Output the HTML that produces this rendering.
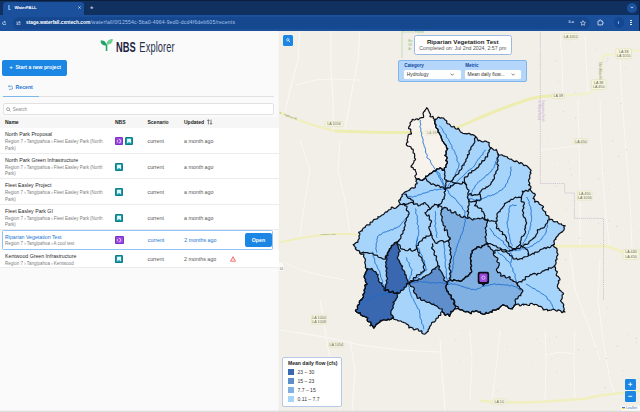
<!DOCTYPE html>
<html><head><meta charset="utf-8"><title>WaterFALL</title>
<style>
*{box-sizing:border-box;margin:0;padding:0}
html,body{width:640px;height:412px;overflow:hidden;background:#fafafa;font-family:"Liberation Sans",sans-serif;}
body{position:relative}
.abs{position:absolute}
#tabstrip{position:absolute;left:0;top:0;width:640px;height:14.5px;background:#10315f;border-top:1px solid #0a1d3c}
#tab{position:absolute;left:3px;top:1.5px;width:81px;height:13px;background:#1a509c;border-radius:3px 3px 0 0}
#toolbar{position:absolute;left:0;top:14.5px;width:640px;height:16px;background:#1a509c}
#pill{position:absolute;left:13px;top:16.5px;width:577px;height:12px;border-radius:6px;background:#164890}
.wt{color:#fff;position:absolute;white-space:nowrap}
#panel{position:absolute;left:0;top:30.5px;width:278.5px;height:381.5px;background:#fafafa}
#logo{position:absolute;left:115.8px;top:39.3px;white-space:nowrap;font-size:15px;line-height:16px;color:#1c2341;transform-origin:0 0;transform:scaleX(0.62)}
#logo b{font-weight:bold}
#logo span{color:#2a3150;margin-left:6px;letter-spacing:0.15px}
#btn{position:absolute;left:2.3px;top:59.5px;width:65.2px;height:16px;background:#1c86e4;border-radius:2px;color:#fff;font-weight:bold;font-size:5.1px;line-height:16px;white-space:nowrap}
#recent{position:absolute;left:15.6px;top:84.2px;font-size:5.15px;font-weight:bold;color:#1976d2;line-height:6.5px}
#tabline{position:absolute;left:2.5px;top:96px;width:271px;height:1.3px;background:#e2e2e2}
#tabline i{position:absolute;left:0;top:-0.2px;width:36px;height:1.6px;background:#7db6ec}
#search{position:absolute;left:2.5px;top:103px;width:271px;height:12px;border:0.6px solid #e2e2e2;border-radius:2px;background:#fff}
#search span{position:absolute;left:9.3px;top:2.9px;font-size:4.5px;line-height:6px;color:#8a8a8a}
#thead{position:absolute;left:0;top:116.5px;width:278.5px;height:11.5px;background:#f6f6f6}
#thead div{position:absolute;top:2.6px;font-size:5px;line-height:6px;font-weight:bold;color:#222}
.row{position:absolute;left:0;width:278.5px;background:#fff;border-bottom:0.6px solid #ececec}
.row.sel{left:2px;width:271.3px;border:0.7px solid #90c4f5;border-radius:1.5px;margin-left:0}
.row .ttl{position:absolute;left:5px;font-size:5.22px;line-height:6.5px;color:#2b2b2b;white-space:nowrap}
.row .sub{position:absolute;left:5px;font-size:4.48px;line-height:6px;color:#7d7d7d;white-space:nowrap}
.row.sel .ttl{color:#1976d2;left:2px}
.row.sel .sub{left:2px}
.row .cell{position:absolute;font-size:5.3px;line-height:6.5px;color:#555;white-space:nowrap}
.row.sel .cell{color:#1976d2;margin-left:-2.7px;margin-top:-1px}
.icw{position:absolute}
.row.sel .icw{margin-left:-2.7px;margin-top:-0.9px}
.ic{display:block;width:8.2px;height:8.2px;border-radius:1.6px;overflow:hidden}
.ic svg{display:block}
.ic.p{background:#9a4ce0;box-shadow:inset 0 0 0 0.9px #7a30c4}
.ic.t{background:#1a9baa;box-shadow:inset 0 0 0 0.9px #0f7c88}
.open{position:absolute;left:242.3px;top:2.3px;width:26.3px;height:14px;border-radius:2px;background:#1c86e4;color:#fff;font-weight:bold;font-size:5.2px;line-height:14px;text-align:center}
.warn{position:absolute}
#map{position:absolute;left:0;top:0}
#map text{font-family:"Liberation Sans",sans-serif}
#msearch{position:absolute;left:282.5px;top:35px;width:10.5px;height:11px;background:#1c86e4;border-radius:1.5px}
#popup{position:absolute;left:413.5px;top:35px;width:98.5px;height:19.5px;background:#fff;border:0.9px solid #9db8de;border-radius:2.5px;text-align:center}
#popup b{display:block;font-size:6.2px;line-height:7.5px;margin-top:1.6px;color:#1d1d1d}
#popup span{display:block;font-size:5.22px;line-height:6.5px;margin-top:0.3px;color:#555}
#cat{position:absolute;left:398px;top:60px;width:129px;height:22px;background:#b5d6fb;border:0.8px solid #82b4ee;border-radius:2px}
#cat .l{position:absolute;top:2.1px;font-size:4.5px;line-height:6px;font-weight:bold;color:#0d47a1}
#cat .s{position:absolute;top:8.7px;height:9.8px;width:56.7px;background:#fff;border-radius:1.5px;font-size:4.85px;line-height:10.4px;color:#333;padding-left:2.8px;white-space:nowrap}
#cat .s svg{position:absolute;right:6.3px;top:3.5px}
#legend{position:absolute;left:282px;top:357px;width:60px;height:49.5px;background:#fff;border:0.8px solid #b5c9e6;border-radius:2px}
#legend b{position:absolute;left:5px;top:1.9px;font-size:5.07px;line-height:6.5px;color:#222;white-space:nowrap;font-weight:bold}
#legend i{position:absolute;left:5px;width:6px;height:6px}
#legend span{position:absolute;left:14.6px;font-size:5px;line-height:6px;color:#333;white-space:nowrap}
.zb{position:absolute;left:624.9px;width:11px;height:11.3px;background:#1c86e4;border-radius:1.3px;color:#fff;text-align:center}
#attr{position:absolute;left:620.5px;top:405.8px;width:19.5px;height:4.9px;background:rgba(255,255,255,0.8);font-size:3.6px;line-height:5px;color:#3a78c2;white-space:nowrap;padding-left:5.6px}
#botshade{position:absolute;left:0;top:409.5px;width:640px;height:2.5px;background:linear-gradient(#fafafa00,#d6d6d6)}
#redge{position:absolute;left:639px;top:0;width:1px;height:30.5px;background:#0b2450}
</style></head><body>
<div id="panel"></div>
<svg id="map" width="640" height="412" viewBox="0 0 640 412">
<defs><clipPath id="mc"><rect x="278.5" y="30" width="361.5" height="382"/></clipPath></defs>
<g clip-path="url(#mc)">
<rect x="278" y="30" width="362" height="382" fill="#f2efe9"/>
<polyline points="331.0,30.0 331.0,70.0 333.0,100.0 333.0,131.0" fill="none" stroke="#f9f8f4" stroke-width="1"/>
<polyline points="296.0,85.0 315.0,80.0 335.0,79.0 360.0,80.0" fill="none" stroke="#f9f8f4" stroke-width="1"/>
<polyline points="360.0,30.0 358.0,60.0 352.0,90.0 345.0,131.0" fill="none" stroke="#f9f8f4" stroke-width="1"/>
<polyline points="300.0,30.0 298.0,60.0 290.0,90.0 285.0,112.0" fill="none" stroke="#f9f8f4" stroke-width="1"/>
<polyline points="578.0,100.0 579.0,140.0 580.0,191.0 580.0,247.0" fill="none" stroke="#f9f8f4" stroke-width="1"/>
<polyline points="540.0,150.0 560.0,148.0 578.0,146.0" fill="none" stroke="#f9f8f4" stroke-width="1"/>
<polyline points="600.0,100.0 601.0,140.0 603.0,180.0 606.0,218.0 610.0,247.0" fill="none" stroke="#f9f8f4" stroke-width="1"/>
<polyline points="620.0,60.0 622.0,100.0 626.0,150.0 630.0,200.0 632.0,247.0" fill="none" stroke="#f9f8f4" stroke-width="1"/>
<polyline points="560.0,36.0 562.0,60.0 563.0,96.0" fill="none" stroke="#f9f8f4" stroke-width="1"/>
<polyline points="585.0,36.0 586.0,60.0 588.0,93.0" fill="none" stroke="#f9f8f4" stroke-width="1"/>
<polyline points="545.0,330.0 546.0,360.0 545.0,401.0" fill="none" stroke="#f9f8f4" stroke-width="1"/>
<polyline points="575.0,330.0 574.0,360.0 575.0,400.0" fill="none" stroke="#f9f8f4" stroke-width="1"/>
<polyline points="545.0,355.0 560.0,352.0 575.0,354.0" fill="none" stroke="#f9f8f4" stroke-width="1"/>
<polyline points="500.0,330.0 497.0,360.0 492.0,401.0" fill="none" stroke="#f9f8f4" stroke-width="1"/>
<polyline points="440.0,340.0 442.0,370.0 445.0,412.0" fill="none" stroke="#f9f8f4" stroke-width="1"/>
<polyline points="350.0,340.0 355.0,370.0 352.0,412.0" fill="none" stroke="#f9f8f4" stroke-width="1"/>
<polyline points="320.0,300.0 325.0,330.0 330.0,360.0 340.0,412.0" fill="none" stroke="#f9f8f4" stroke-width="1"/>
<polyline points="300.0,140.0 310.0,170.0 305.0,200.0 300.0,236.0" fill="none" stroke="#f9f8f4" stroke-width="1"/>
<polyline points="340.0,140.0 338.0,170.0 345.0,200.0 350.0,234.0" fill="none" stroke="#f9f8f4" stroke-width="1"/>
<polyline points="284.0,262.0 300.0,270.0 320.0,275.0 345.0,280.0" fill="none" stroke="#f9f8f4" stroke-width="1"/>
<polyline points="600.0,260.0 598.0,300.0 603.0,340.0 610.0,380.0 615.0,394.0" fill="none" stroke="#f9f8f4" stroke-width="1"/>
<polyline points="570.0,250.0 575.0,290.0 590.0,330.0 600.0,360.0" fill="none" stroke="#f9f8f4" stroke-width="1"/>
<polyline points="279.0,330.0 300.0,333.0 330.0,338.0 360.0,345.0 400.0,350.0 440.0,352.0" fill="none" stroke="#f9f8f4" stroke-width="1"/>
<polyline points="470.0,330.0 472.0,360.0 470.0,401.0" fill="none" stroke="#f9f8f4" stroke-width="1"/>
<polyline points="279.0,112.0 295.0,119.0 310.0,124.0 325.0,128.5 335.0,131.0" fill="none" stroke="#f0efba" stroke-width="2.0" stroke-linejoin="round"/>
<polyline points="335.0,131.0 380.0,132.5 436.0,132.5 450.0,130.0 457.5,127.5 480.0,117.5 505.0,107.5 530.0,98.8 543.8,96.3 563.4,95.8" fill="none" stroke="#eeedb0" stroke-width="3.0" stroke-linejoin="round"/>
<polyline points="563.4,95.8 587.5,93.6 596.3,89.3 600.6,84.9 601.7,71.8 602.4,58.6 605.0,55.3 616.0,53.8 640.0,49.9" fill="none" stroke="#f2f1c8" stroke-width="2.0" stroke-linejoin="round"/>
<polyline points="278.7,242.7 296.0,239.0 313.7,236.0 331.0,234.0 348.6,234.0 359.5,234.8" fill="none" stroke="#f0efba" stroke-width="1.8" stroke-linejoin="round"/>
<polyline points="553.4,246.3 590.0,246.3 607.8,246.3 622.0,251.8 640.0,254.0" fill="none" stroke="#f1f0c2" stroke-width="3.0" stroke-linejoin="round"/>
<polyline points="480.0,400.8 492.5,401.8 517.5,402.5 542.5,401.8 567.5,400.0 585.0,398.8 600.0,395.5 615.0,393.8 625.0,392.5 640.0,391.0" fill="none" stroke="#f0efbe" stroke-width="2.5" stroke-linejoin="round"/>
<line x1="402" y1="30" x2="402" y2="58" stroke="#b9dcae" stroke-width="0.8"/>
<line x1="402" y1="32" x2="414" y2="32" stroke="#b9dcae" stroke-width="0.8"/>
<text x="408.3" y="41.6" font-size="3.3" fill="#7cc47c">Bo</text>
<text x="408.3" y="45.7" font-size="3.3" fill="#7cc47c">Wi</text>
<text x="408.3" y="49.9" font-size="3.3" fill="#7cc47c">Ar</text>
<text x="414.8" y="33.2" font-size="3.3" fill="#7cc47c">Forest</text>
<text transform="translate(538.2,100) rotate(90)" font-size="2.6" fill="#c3aed0">St. Helena Parish</text>
<text transform="translate(542.4,100) rotate(90)" font-size="2.6" fill="#c3aed0">Tangipahoa Parish</text>
<text transform="translate(598.6,62) rotate(90)" font-size="2.6" fill="#8a8a80">Ollie Wilson Rd</text>
<circle cx="280.3" cy="113" r="0.8" fill="#9ccf8f"/>
<text transform="translate(284,115.3) rotate(20)" font-size="2.5" fill="#8a8a80">Highway 38</text>
<text x="320" y="235.2" font-size="2.5" fill="#8a8a80">Highway 1057</text>
<polyline points="540.3,30.0 540.3,183.5 564.7,183.5 564.7,193.0 574.4,193.0 574.4,218.4 603.5,218.4 603.5,300.0" fill="none" stroke="#b9a5c4" stroke-width="0.6" stroke-dasharray="1.2,0.9"/>
<circle cx="575.1" cy="92.8" r="0.51" fill="#b5d3ea"/>
<circle cx="551.7" cy="227.6" r="0.44" fill="#b5d3ea"/>
<circle cx="550.4" cy="217.6" r="0.36" fill="#b5d3ea"/>
<circle cx="585.3" cy="64.4" r="0.37" fill="#b5d3ea"/>
<circle cx="584.5" cy="329.4" r="0.38" fill="#b5d3ea"/>
<circle cx="565.8" cy="259.6" r="0.59" fill="#b5d3ea"/>
<circle cx="598.7" cy="178.8" r="0.59" fill="#b5d3ea"/>
<circle cx="549.3" cy="340.5" r="0.42" fill="#b5d3ea"/>
<circle cx="558.4" cy="81.2" r="0.43" fill="#b5d3ea"/>
<circle cx="620.9" cy="103.3" r="0.50" fill="#b5d3ea"/>
<circle cx="604.4" cy="170.3" r="0.49" fill="#b5d3ea"/>
<circle cx="550.8" cy="60.9" r="0.40" fill="#b5d3ea"/>
<circle cx="608.3" cy="189.7" r="0.43" fill="#b5d3ea"/>
<circle cx="599.5" cy="198.6" r="0.42" fill="#b5d3ea"/>
<circle cx="618.9" cy="284.6" r="0.41" fill="#b5d3ea"/>
<circle cx="598.4" cy="223.8" r="0.57" fill="#b5d3ea"/>
<circle cx="612.8" cy="140.8" r="0.60" fill="#b5d3ea"/>
<circle cx="556.0" cy="186.3" r="0.54" fill="#b5d3ea"/>
<circle cx="559.1" cy="211.1" r="0.36" fill="#b5d3ea"/>
<circle cx="607.1" cy="307.6" r="0.49" fill="#b5d3ea"/>
<circle cx="626.4" cy="149.8" r="0.52" fill="#b5d3ea"/>
<circle cx="600.3" cy="243.0" r="0.46" fill="#b5d3ea"/>
<circle cx="623.1" cy="370.6" r="0.47" fill="#b5d3ea"/>
<circle cx="606.8" cy="61.2" r="0.53" fill="#b5d3ea"/>
<circle cx="605.2" cy="387.6" r="0.56" fill="#b5d3ea"/>
<circle cx="571.5" cy="175.0" r="0.52" fill="#b5d3ea"/>
<circle cx="547.1" cy="201.6" r="0.39" fill="#b5d3ea"/>
<circle cx="555.9" cy="60.6" r="0.54" fill="#b5d3ea"/>
<circle cx="557.0" cy="126.7" r="0.45" fill="#b5d3ea"/>
<circle cx="626.0" cy="68.2" r="0.46" fill="#b5d3ea"/>
<circle cx="596.1" cy="349.2" r="0.55" fill="#b5d3ea"/>
<circle cx="625.4" cy="137.4" r="0.45" fill="#b5d3ea"/>
<circle cx="578.4" cy="349.5" r="0.59" fill="#b5d3ea"/>
<circle cx="559.0" cy="101.7" r="0.41" fill="#b5d3ea"/>
<circle cx="566.7" cy="209.7" r="0.50" fill="#b5d3ea"/>
<circle cx="569.4" cy="41.4" r="0.45" fill="#b5d3ea"/>
<circle cx="579.3" cy="238.2" r="0.59" fill="#b5d3ea"/>
<circle cx="609.2" cy="220.4" r="0.50" fill="#b5d3ea"/>
<circle cx="607.9" cy="58.9" r="0.57" fill="#b5d3ea"/>
<circle cx="617.5" cy="346.1" r="0.55" fill="#b5d3ea"/>
<circle cx="581.5" cy="179.6" r="0.38" fill="#b5d3ea"/>
<circle cx="604.0" cy="61.8" r="0.37" fill="#b5d3ea"/>
<circle cx="564.4" cy="96.8" r="0.44" fill="#b5d3ea"/>
<circle cx="549.9" cy="40.1" r="0.39" fill="#b5d3ea"/>
<circle cx="554.4" cy="167.3" r="0.36" fill="#b5d3ea"/>
<circle cx="626.3" cy="254.9" r="0.39" fill="#b5d3ea"/>
<circle cx="568.5" cy="161.6" r="0.44" fill="#b5d3ea"/>
<circle cx="556.4" cy="337.1" r="0.60" fill="#b5d3ea"/>
<circle cx="588.3" cy="209.3" r="0.37" fill="#b5d3ea"/>
<circle cx="554.5" cy="159.9" r="0.42" fill="#b5d3ea"/>
<circle cx="622.1" cy="96.5" r="0.36" fill="#b5d3ea"/>
<circle cx="633.4" cy="224.9" r="0.39" fill="#b5d3ea"/>
<circle cx="595.5" cy="49.5" r="0.48" fill="#b5d3ea"/>
<circle cx="636.0" cy="342.2" r="0.52" fill="#b5d3ea"/>
<circle cx="569.3" cy="168.3" r="0.39" fill="#b5d3ea"/>
<circle cx="616.8" cy="226.4" r="0.54" fill="#b5d3ea"/>
<circle cx="575.7" cy="118.1" r="0.55" fill="#b5d3ea"/>
<circle cx="636.6" cy="338.4" r="0.55" fill="#b5d3ea"/>
<circle cx="621.1" cy="299.0" r="0.41" fill="#b5d3ea"/>
<circle cx="593.1" cy="164.4" r="0.36" fill="#b5d3ea"/>
<circle cx="547.6" cy="137.8" r="0.41" fill="#b5d3ea"/>
<circle cx="609.4" cy="374.8" r="0.46" fill="#b5d3ea"/>
<circle cx="632.1" cy="385.8" r="0.59" fill="#b5d3ea"/>
<circle cx="578.9" cy="117.2" r="0.41" fill="#b5d3ea"/>
<circle cx="563.3" cy="111.5" r="0.51" fill="#b5d3ea"/>
<circle cx="628.7" cy="334.2" r="0.47" fill="#b5d3ea"/>
<circle cx="605.7" cy="319.9" r="0.37" fill="#b5d3ea"/>
<circle cx="606.4" cy="358.4" r="0.55" fill="#b5d3ea"/>
<circle cx="614.8" cy="207.3" r="0.39" fill="#b5d3ea"/>
<circle cx="618.4" cy="156.4" r="0.55" fill="#b5d3ea"/>
<circle cx="556.6" cy="355.7" r="0.38" fill="#bcd6ea"/>
<circle cx="553.6" cy="377.1" r="0.33" fill="#bcd6ea"/>
<circle cx="455.2" cy="339.8" r="0.48" fill="#bcd6ea"/>
<circle cx="536.8" cy="339.5" r="0.47" fill="#bcd6ea"/>
<circle cx="557.6" cy="372.7" r="0.37" fill="#bcd6ea"/>
<circle cx="505.8" cy="338.5" r="0.30" fill="#bcd6ea"/>
<circle cx="556.5" cy="372.2" r="0.41" fill="#bcd6ea"/>
<circle cx="552.0" cy="358.2" r="0.47" fill="#bcd6ea"/>
<circle cx="539.1" cy="343.7" r="0.35" fill="#bcd6ea"/>
<circle cx="475.2" cy="345.6" r="0.42" fill="#bcd6ea"/>
<circle cx="471.1" cy="357.2" r="0.33" fill="#bcd6ea"/>
<circle cx="549.2" cy="353.0" r="0.39" fill="#bcd6ea"/>
<circle cx="510.0" cy="388.8" r="0.38" fill="#bcd6ea"/>
<circle cx="550.1" cy="362.6" r="0.41" fill="#bcd6ea"/>
<circle cx="502.8" cy="331.2" r="0.39" fill="#bcd6ea"/>
<circle cx="462.0" cy="330.3" r="0.46" fill="#bcd6ea"/>
<circle cx="460.7" cy="360.8" r="0.45" fill="#bcd6ea"/>
<circle cx="506.8" cy="351.2" r="0.40" fill="#bcd6ea"/>
<circle cx="506.7" cy="381.0" r="0.32" fill="#bcd6ea"/>
<circle cx="507.2" cy="346.2" r="0.36" fill="#bcd6ea"/>
<circle cx="532.7" cy="363.0" r="0.41" fill="#bcd6ea"/>
<circle cx="531.2" cy="389.3" r="0.39" fill="#bcd6ea"/>
<circle cx="513.5" cy="362.9" r="0.40" fill="#bcd6ea"/>
<circle cx="523.1" cy="359.4" r="0.41" fill="#bcd6ea"/>
<circle cx="497.4" cy="391.2" r="0.44" fill="#bcd6ea"/>
<rect x="325" y="121.5" width="18" height="5.0" rx="0.8" fill="#f7f6df" stroke="#dddbb0" stroke-width="0.5"/>
<text x="334.0" y="125.33" font-size="3.7" text-anchor="middle" fill="#666660">LA 1054</text>
<rect x="426" y="130" width="11.5" height="4.800000000000011" rx="0.8" fill="#f7f6df" stroke="#dddbb0" stroke-width="0.5"/>
<text x="431.75" y="133.73" font-size="3.7" text-anchor="middle" fill="#666660">LA 38</text>
<rect x="563.4" y="33.5" width="14.600000000000023" height="5.5" rx="0.8" fill="#f7f6df" stroke="#dddbb0" stroke-width="0.5"/>
<text x="570.7" y="37.58" font-size="3.7" text-anchor="middle" fill="#666660">LA 1055</text>
<rect x="616" y="48.8" width="15.5" height="9.800000000000004" rx="0.8" fill="#f7f6df" stroke="#dddbb0" stroke-width="0.5"/>
<text x="623.75" y="52.58" font-size="3.7" text-anchor="middle" fill="#666660">LA 38</text>
<text x="623.75" y="57.48" font-size="3.7" text-anchor="middle" fill="#666660">LA 1055</text>
<rect x="591.4" y="79.8" width="14.600000000000023" height="9.700000000000003" rx="0.8" fill="#f7f6df" stroke="#dddbb0" stroke-width="0.5"/>
<text x="598.7" y="83.56" font-size="3.7" text-anchor="middle" fill="#666660">LA 38</text>
<text x="598.7" y="88.41" font-size="3.7" text-anchor="middle" fill="#666660">LA 450</text>
<rect x="552" y="93.4" width="12.5" height="5.199999999999989" rx="0.8" fill="#f7f6df" stroke="#dddbb0" stroke-width="0.5"/>
<text x="558.25" y="97.33" font-size="3.7" text-anchor="middle" fill="#666660">LA 38</text>
<rect x="574" y="138.8" width="14" height="4.799999999999983" rx="0.8" fill="#f7f6df" stroke="#dddbb0" stroke-width="0.5"/>
<text x="581.0" y="142.53" font-size="3.7" text-anchor="middle" fill="#666660">LA 450</text>
<rect x="577.5" y="191" width="14.5" height="9.199999999999989" rx="0.8" fill="#f7f6df" stroke="#dddbb0" stroke-width="0.5"/>
<text x="584.75" y="194.63" font-size="3.7" text-anchor="middle" fill="#666660">LA 450</text>
<text x="584.75" y="199.23" font-size="3.7" text-anchor="middle" fill="#666660">LA 1056</text>
<rect x="623" y="249.5" width="16" height="10.0" rx="0.8" fill="#f7f6df" stroke="#dddbb0" stroke-width="0.5"/>
<text x="631.0" y="253.33" font-size="3.7" text-anchor="middle" fill="#666660">LA 440</text>
<text x="631.0" y="258.33" font-size="3.7" text-anchor="middle" fill="#666660">LA 450</text>
<rect x="311.5" y="315.2" width="15.100000000000023" height="8.800000000000011" rx="0.8" fill="#f7f6df" stroke="#dddbb0" stroke-width="0.5"/>
<text x="319.05" y="318.73" font-size="3.7" text-anchor="middle" fill="#666660">LA 1054</text>
<text x="319.05" y="323.13" font-size="3.7" text-anchor="middle" fill="#666660">LA 1058</text>
<rect x="328.8" y="342.3" width="15.0" height="5.0" rx="0.8" fill="#f7f6df" stroke="#dddbb0" stroke-width="0.5"/>
<text x="336.3" y="346.13" font-size="3.7" text-anchor="middle" fill="#666660">LA 1054</text>
<rect x="492.5" y="399" width="13.5" height="5" rx="0.8" fill="#f7f6df" stroke="#dddbb0" stroke-width="0.5"/>
<text x="499.25" y="402.83" font-size="3.7" text-anchor="middle" fill="#666660">LA 10</text>
<rect x="276" y="262" width="8" height="9.5" rx="3" fill="#fafaf6" stroke="#e4e2d8" stroke-width="0.4"/>
<text x="281.3" y="269.6" font-size="3" text-anchor="middle" fill="#777">64</text>
<polygon points="426.62,107.71 426.77,108.01 426.59,108.27 425.92,109.24 425.12,110.15 424.66,110.50 424.69,110.94 424.86,111.22 424.67,111.02 424.05,111.45 423.33,112.57 423.09,113.52 423.37,114.88 423.65,116.48 423.43,117.30 422.49,117.55 421.56,117.69 420.70,117.85 419.89,118.17 419.14,118.87 418.54,119.62 418.08,119.74 417.59,119.23 416.97,118.75 416.02,119.03 415.09,119.71 414.39,120.04 413.65,119.73 412.78,119.33 412.17,119.60 412.01,120.61 411.52,121.56 410.73,122.01 410.15,122.65 410.07,123.47 410.31,123.84 410.37,124.39 409.95,125.50 409.22,126.41 408.68,127.22 408.64,128.43 409.30,128.90 410.17,128.92 410.70,129.33 410.78,130.51 410.77,131.77 411.00,132.51 411.37,132.92 411.36,133.92 411.29,134.17 410.70,133.94 409.65,134.24 408.66,134.65 408.16,135.21 408.07,136.48 407.85,137.51 407.76,138.18 407.39,139.37 407.17,140.58 407.36,141.06 407.80,141.47 408.00,142.01 407.65,142.16 406.94,142.58 406.38,143.80 406.39,144.99 407.08,145.63 407.77,146.06 408.77,146.28 410.27,146.60 411.12,147.30 411.22,148.27 411.58,149.06 412.10,149.29 412.60,149.06 412.95,149.32 413.27,149.71 413.31,150.73 413.15,152.12 413.18,153.01 413.65,153.16 414.26,153.28 414.57,153.96 414.62,155.01 414.81,155.97 414.48,156.92 414.63,158.15 415.14,158.83 415.53,159.13 415.41,159.79 414.85,160.26 414.33,160.47 413.99,160.86 414.02,161.48 413.94,161.98 413.37,163.08 412.41,164.60 411.52,165.50 411.10,166.13 411.06,166.84 412.16,167.35 412.63,167.44 412.96,167.55 413.29,167.99 413.29,168.69 413.44,169.30 414.31,169.56 415.30,169.56 415.24,170.04 415.37,170.61 415.85,171.87 416.41,173.39 416.51,174.24 416.07,174.68 415.35,175.33 414.86,176.00 414.94,176.55 415.53,177.55 416.20,178.99 417.37,179.13 417.97,178.84 418.58,178.53 418.92,178.62 419.09,179.20 420.17,179.96 421.63,180.43 422.41,180.40 423.05,180.04 423.11,179.39 423.40,179.61 424.15,179.11 425.09,178.07 425.60,177.42 425.68,176.60 425.76,176.17 426.34,176.39 427.43,176.05 428.55,175.08 429.17,174.25 429.87,173.74 430.07,173.41 430.20,173.47 430.69,173.59 431.58,173.14 432.55,172.06 433.36,171.09 434.09,170.93 434.89,171.20 435.66,170.93 436.26,169.85 436.75,168.93 437.35,168.81 438.17,169.02 439.01,168.89 439.55,168.41 439.88,167.83 440.87,168.18 442.06,168.98 442.45,169.82 442.35,170.32 442.83,170.38 443.61,170.22 444.38,170.17 444.13,169.23 444.30,168.05 444.99,167.49 445.73,167.40 446.02,166.92 445.83,166.52 445.66,166.21 445.97,165.10 446.68,163.82 447.29,162.87 447.38,161.61 446.54,160.75 445.88,160.63 445.88,160.40 446.46,159.44 447.03,158.30 447.04,157.39 446.44,156.49 445.65,155.78 445.10,155.64 444.91,155.40 445.57,154.67 446.18,154.01 446.37,153.66 446.16,152.84 445.95,151.71 446.16,150.96 446.79,150.11 447.45,148.97 447.70,148.35 446.85,148.38 446.49,147.82 446.41,146.65 446.17,145.52 445.90,145.04 445.83,145.07 445.63,144.97 444.91,144.28 444.05,143.21 443.59,142.29 443.37,141.79 442.90,141.54 442.41,141.14 442.23,140.36 441.95,139.29 441.36,138.26 441.07,137.48 441.26,136.95 441.22,136.45 440.65,135.73 440.04,134.77 439.54,133.58 438.98,132.64 438.36,132.36 438.07,132.28 438.16,131.57 438.14,130.18 437.65,128.96 437.09,128.55 436.80,128.51 436.43,128.06 435.86,127.08 435.64,126.05 435.87,125.35 435.93,124.74 435.52,124.23 435.01,123.97 434.81,123.44 434.97,122.22 435.11,120.88 434.83,120.22 435.26,119.79 435.24,119.25 435.32,119.29 434.07,119.13 433.33,118.49 433.32,117.28 432.92,116.39 432.66,116.26 432.31,116.70 430.97,116.94 429.95,116.36 430.37,115.20 430.52,114.32 430.19,113.65 429.68,113.04 429.38,112.68 429.38,112.48 429.08,111.66 428.36,110.18 427.82,108.91 427.60,108.47 427.18,108.39" fill="#f8f3ec" fill-opacity="0.8" stroke="none"/>
<polygon points="435.32,119.29 436.18,119.40 436.78,118.83 437.50,117.83 438.38,117.16 439.11,117.30 439.66,117.90 440.38,118.17 441.36,117.72 442.51,118.03 442.77,118.02 443.09,117.94 443.68,118.18 444.20,118.94 445.19,119.97 446.46,120.80 446.84,121.25 446.62,121.19 446.57,121.24 446.64,121.84 446.71,122.85 447.33,123.69 448.50,124.00 449.33,124.05 449.53,124.14 449.96,124.78 450.60,125.77 451.20,126.62 452.33,126.93 453.57,126.69 453.91,126.29 453.93,126.25 454.40,126.85 454.91,127.87 455.60,128.80 456.83,129.19 457.75,128.95 457.86,128.43 458.10,128.17 458.82,129.01 459.54,130.29 460.08,131.33 460.66,131.92 461.20,132.35 462.06,132.54 462.21,132.90 462.64,133.26 463.38,133.48 464.07,133.55 465.14,133.59 466.36,133.70 466.77,133.88 466.88,134.03 467.34,133.88 468.04,133.51 468.65,133.31 469.50,133.56 470.52,134.14 470.99,134.57 471.04,134.88 471.64,134.72 472.69,134.64 473.67,135.08 474.96,135.92 475.99,136.76 476.06,137.25 476.22,137.49 476.82,137.81 477.24,138.67 477.66,139.84 478.31,140.69 478.46,140.87 478.09,140.68 478.57,140.25 479.63,140.37 480.71,141.00 481.88,141.64 483.25,141.84 484.18,141.55 484.38,141.16 484.71,141.04 485.78,141.21 486.80,141.67 487.80,142.19 488.87,142.53 489.15,142.61 489.08,142.55 489.18,142.73 489.15,143.09 489.00,143.92 488.91,144.83 489.17,145.80 489.84,147.02 490.62,148.02 491.35,147.71 491.33,147.68 491.81,148.22 492.94,149.17 493.93,150.00 495.06,150.25 496.04,149.90 496.14,149.40 496.12,149.47 496.56,150.04 497.04,151.13 497.29,152.30 497.68,153.12 498.16,153.50 498.21,153.76 498.03,154.32 498.54,154.87 499.65,155.07 500.62,155.00 501.77,154.94 502.67,155.11 502.79,155.48 503.28,155.84 504.58,156.08 505.58,156.48 506.50,156.76 507.36,156.94 507.43,157.20 507.45,157.68 508.37,158.36 509.37,158.98 510.11,159.27 510.95,159.20 511.24,159.06 511.18,159.22 511.93,159.84 513.15,160.71 514.06,161.42 514.95,161.64 515.72,161.35 515.84,160.92 516.10,160.85 517.21,161.38 518.35,162.36 519.08,163.26 519.86,163.64 520.21,163.33 520.11,162.75 520.75,162.55 521.99,163.11 522.82,164.21 523.54,165.25 524.18,165.68 524.27,165.44 524.70,165.25 525.96,165.44 527.21,166.13 528.00,167.05 528.76,167.78 529.24,168.15 529.19,168.35 529.42,168.74 530.36,169.46 531.14,170.29 530.55,171.51 530.20,172.34 530.35,172.43 530.78,172.70 530.96,173.26 530.65,173.62 530.05,174.43 529.63,175.79 529.63,176.73 529.85,177.38 529.85,178.37 529.40,179.05 528.79,179.52 528.56,180.64 528.91,181.82 529.49,182.63 529.75,183.69 529.45,184.55 528.93,184.62 528.69,184.78 529.29,185.29 530.20,185.92 530.95,186.81 530.92,188.01 530.29,189.05 529.80,189.43 529.89,189.47 530.52,190.05 531.22,191.18 532.27,192.45 533.37,193.29 533.83,193.45 533.89,193.27 534.30,193.33 534.96,193.94 535.38,194.90 534.50,196.26 533.87,196.98 533.77,197.61 533.90,198.20 533.73,198.12 533.03,198.22 533.55,198.52 534.44,199.31 534.96,200.47 534.74,201.54 534.72,202.05 535.30,201.92 535.95,201.51 536.82,201.38 538.08,201.84 538.87,202.74 538.98,203.64 539.40,204.25 540.29,204.59 541.10,204.96 542.06,205.57 543.21,206.33 543.50,207.24 543.06,207.61 542.43,207.83 542.18,208.23 542.36,208.83 542.78,209.58 543.45,210.51 544.45,211.43 545.39,211.97 545.85,211.89 545.58,212.02 545.48,212.79 545.78,213.99 546.12,215.02 546.78,215.48 547.94,215.65 548.80,216.16 548.89,217.21 549.00,218.39 549.52,219.22 549.99,219.49 550.52,219.42 551.43,219.46 552.49,219.57 552.62,220.20 553.02,221.06 553.92,221.71 554.80,221.89 556.13,221.73 557.32,221.65 557.49,221.96 557.72,222.66 558.51,223.43 559.25,223.90 560.26,224.01 561.34,223.97 561.49,224.07 561.47,224.44 562.18,224.96 563.02,225.43 564.00,225.71 565.25,225.86 564.49,226.02 563.92,226.67 563.93,227.34 564.23,227.89 564.22,229.17 563.65,230.44 562.90,231.19 562.21,231.98 561.91,232.34 561.67,232.07 561.07,232.34 560.03,233.32 558.92,234.11 558.24,234.87 558.12,235.61 558.16,235.65 557.85,235.63 557.05,236.50 556.15,237.47 555.64,238.14 555.74,238.99 555.86,239.37 555.44,239.32 554.55,240.07 553.84,240.98 553.99,242.03 554.37,243.42 554.41,244.29 553.85,244.54 553.07,245.26 553.29,245.88 554.20,246.72 555.09,247.46 555.64,247.90 556.19,248.09 556.74,248.31 556.90,248.79 556.87,249.56 557.28,250.46 556.91,251.44 556.89,252.50 557.29,253.03 557.80,253.56 557.98,254.51 557.65,255.27 557.04,255.87 556.62,256.95 556.64,258.01 556.92,258.49 557.05,259.00 556.75,259.65 556.15,259.85 555.63,260.04 555.63,260.97 555.96,261.90 556.10,262.83 555.67,264.29 554.89,265.43 554.31,265.88 554.27,266.44 554.61,266.83 555.10,266.89 555.45,267.39 555.50,268.60 555.41,269.73 555.52,270.34 556.02,270.86 556.75,271.39 557.24,271.65 557.30,272.18 556.70,273.34 556.25,274.74 556.41,275.67 556.91,275.91 557.50,276.03 558.40,276.73 559.44,278.06 559.98,279.35 559.83,279.99 559.20,280.23 558.51,280.73 558.24,280.95 558.46,281.02 558.77,281.83 558.71,282.93 558.18,283.82 557.59,285.10 557.39,286.44 557.63,287.04 557.92,287.45 557.79,287.98 558.13,288.20 558.71,288.61 559.46,289.25 559.62,289.87 559.28,290.18 559.38,290.18 559.95,290.22 560.59,290.69 561.54,291.67 562.87,292.83 563.39,293.19 563.47,293.90 562.98,294.55 562.32,294.80 562.04,295.59 562.20,296.69 562.36,297.46 562.04,298.63 561.27,299.89 560.58,300.42 560.69,301.01 561.07,301.48 561.52,302.00 562.24,302.71 563.19,303.67 563.75,304.76 563.58,305.61 563.22,305.93 563.26,306.01 563.43,306.62 563.88,307.89 564.20,309.06 564.11,309.73 563.69,310.41 563.37,310.97 563.53,310.99 564.17,311.12 564.88,311.96 563.52,311.61 562.72,311.91 562.44,312.46 561.97,312.67 561.51,312.21 561.01,311.19 559.75,310.26 558.32,309.88 557.70,310.23 557.29,310.87 556.60,311.12 555.98,310.69 555.01,309.86 553.43,309.26 552.35,309.24 552.06,309.63 551.54,310.12 550.86,310.23 550.29,310.16 549.36,310.29 548.15,310.62 547.60,310.79 547.67,310.44 547.40,309.73 546.75,309.24 546.03,309.44 544.97,309.65 543.65,309.90 543.09,309.69 542.98,308.88 542.39,307.78 541.60,306.89 540.82,306.47 539.62,306.40 538.58,306.33 538.45,306.02 538.43,305.80 537.83,305.41 537.18,304.91 536.31,304.52 535.11,304.44 534.60,304.65 534.65,304.85 534.11,304.71 533.19,304.18 532.29,303.54 531.03,303.25 530.07,303.77 529.65,304.68 529.34,305.41 528.48,305.48 527.24,304.95 526.15,304.38 525.15,304.30 524.14,304.67 523.58,305.00 523.70,304.86 523.80,304.35 523.24,304.06 522.23,304.41 521.38,305.21 520.39,305.79 519.44,305.62 519.09,304.86 518.76,304.16 517.63,304.08 516.24,304.55 515.24,305.09 514.34,305.30 514.20,305.66 514.23,305.73 514.01,306.07 513.37,307.14 512.57,308.08 512.04,308.38 511.98,308.66 512.20,308.94 512.22,308.92 511.72,308.63 510.35,308.68 509.12,308.50 508.36,307.79 507.64,306.83 507.27,306.20 507.37,306.12 506.61,306.12 505.21,305.75 504.23,305.21 503.71,304.81 503.18,304.68 502.99,304.71 502.89,304.70 502.85,305.26 502.55,305.30 501.66,305.63 500.40,306.85 499.30,307.97 498.74,308.62 498.59,309.27 498.26,308.86 498.01,308.58 497.45,308.82 496.78,309.45 496.09,310.01 495.02,310.16 493.56,310.04 492.51,310.14 492.23,310.79 492.30,311.81 492.04,312.26 491.22,311.91 490.16,311.82 489.19,312.71 488.23,313.38 487.06,313.42 486.22,312.82 486.06,312.30 486.06,312.56 485.55,313.46 484.59,314.22 483.52,314.26 482.26,313.86 481.06,313.44 480.36,312.84 480.48,312.24 480.32,311.95 479.69,312.05 479.13,312.24 478.28,312.09 477.31,311.35 476.60,310.78 476.24,310.62 475.53,311.05 474.53,311.57 473.73,311.66 473.03,311.42 472.18,311.46 471.56,312.14 471.43,313.08 471.13,313.61 470.12,313.11 468.87,312.23 467.76,311.56 466.50,311.44 465.86,311.73 465.76,311.95 464.93,311.74 463.64,311.12 462.78,310.36 461.85,309.80 461.31,309.67 461.45,309.84 460.98,309.96 459.79,309.67 458.88,308.96 457.72,308.48 456.75,308.53 456.52,308.79 456.19,308.85 455.02,308.74 454.65,309.08 454.20,309.50 453.41,310.50 452.37,311.56 451.45,311.68 450.94,311.40 450.82,311.71 451.10,312.30 450.93,312.89 450.32,314.17 449.72,315.56 449.57,316.41 448.95,315.60 448.69,314.59 448.03,314.14 446.43,314.56 445.37,315.34 444.81,314.99 444.22,314.22 444.00,313.37 443.97,312.79 443.34,312.44 442.49,311.93 442.27,310.97 441.32,311.84 440.75,312.61 440.74,313.52 440.86,314.80 440.53,315.29 439.69,315.27 438.91,315.51 438.51,315.65 438.50,315.89 438.55,316.80 438.24,317.80 437.50,318.08 436.64,318.21 436.08,318.59 435.96,318.87 435.94,319.32 435.65,320.51 434.84,321.67 433.68,322.06 432.56,322.20 431.85,322.63 431.58,323.08 431.47,323.65 431.17,324.71 430.58,325.70 429.83,326.32 429.38,326.79 429.41,327.49 429.67,327.78 429.67,327.87 429.21,328.50 428.52,329.22 428.08,329.67 428.13,330.54 428.13,331.38 428.22,331.45 428.00,331.26 427.33,331.74 426.38,332.78 425.49,333.61 424.89,334.12 423.86,333.99 422.98,333.81 422.07,333.24 421.75,332.30 421.98,331.35 421.72,330.84 420.93,330.87 420.35,331.11 419.85,331.05 418.79,330.98 418.38,330.19 418.24,329.25 417.28,328.82 415.95,329.11 414.98,329.71 414.02,329.95 413.31,329.53 413.26,328.72 412.86,328.10 411.56,327.41 410.43,327.30 409.68,327.66 408.96,327.93 408.81,327.58 409.01,326.55 408.48,325.31 407.52,324.44 406.99,324.14 406.54,324.13 406.16,323.97 406.19,323.72 405.86,323.25 404.62,322.78 403.50,322.45 402.74,322.24 401.96,321.99 401.68,321.62 401.57,321.22 400.56,320.97 399.25,320.99 398.48,320.90 397.81,320.65 397.30,320.31 397.25,320.00 396.77,319.76 395.45,319.57 394.36,319.33 393.74,319.05 393.06,318.78 393.35,318.41 393.55,317.80 393.14,317.59 392.18,318.13 390.92,319.19 389.78,319.78 389.07,319.69 388.76,319.66 388.33,319.20 387.86,319.31 387.33,319.81 386.95,320.22 386.12,320.22 384.55,319.99 383.13,319.95 382.41,320.30 381.82,320.78 381.17,320.88 380.75,320.39 380.56,320.37 380.56,320.49 380.25,321.50 379.35,322.50 378.11,323.17 377.09,323.90 376.58,324.21 376.34,324.09 376.08,324.61 375.54,325.81 374.81,326.76 374.17,327.31 373.88,327.84 373.92,328.13 373.27,327.07 372.60,325.94 371.82,325.35 370.63,325.43 370.12,325.69 370.63,325.27 371.06,324.46 371.06,323.30 370.77,322.33 370.20,322.00 369.14,322.00 367.87,321.53 367.17,320.30 367.32,318.93 367.73,318.18 367.88,318.00 367.22,317.83 366.50,317.37 365.18,316.79 364.26,316.37 364.25,316.25 363.95,316.34 363.25,316.34 362.51,316.00 361.19,315.33 360.42,314.42 360.32,313.49 360.31,312.96 359.75,312.91 358.99,313.04 358.21,312.89 357.01,312.27 355.83,311.39 355.47,310.61 355.55,310.12 355.99,309.76 356.77,309.54 357.41,309.24 357.57,308.18 357.38,307.02 357.32,306.19 357.79,305.31 358.59,304.58 359.28,304.41 359.53,303.98 359.39,302.84 359.31,301.81 359.68,301.00 360.47,300.06 361.30,299.63 361.76,299.84 361.84,299.68 361.92,299.03 362.06,298.66 362.69,298.03 363.33,296.96 363.48,296.35 363.18,295.67 362.99,294.62 363.33,294.05 364.05,293.46 364.58,292.39 364.56,291.69 364.24,291.04 364.09,290.12 364.38,289.41 364.93,288.87 365.31,287.80 365.26,286.67 364.94,286.07 364.80,285.47 365.16,284.79 365.92,284.66 366.66,284.68 366.97,284.16 366.67,283.34 366.00,282.55 365.43,281.51 365.30,280.35 365.52,279.77 365.65,279.70 365.34,279.24 364.64,278.22 364.18,277.15 364.20,275.98 364.76,274.48 365.41,273.63 365.68,273.33 365.53,272.78 365.39,272.45 365.67,272.28 366.30,271.36 366.83,270.20 366.61,269.29 366.02,268.40 365.48,267.61 365.30,267.35 365.41,267.05 365.54,265.94 365.43,264.58 365.12,263.63 364.82,262.79 364.76,262.01 364.97,261.71 365.27,261.40 365.40,260.29 365.17,258.92 364.64,258.03 364.02,257.35 363.56,256.68 363.42,256.42 363.55,256.15 363.77,255.11 363.82,254.22 363.56,253.84 362.85,254.02 362.09,254.30 360.76,254.04 359.79,253.04 359.71,251.77 359.28,250.76 358.37,250.49 357.56,250.53 356.73,250.17 355.78,249.22 355.30,248.22 355.71,247.71 355.93,247.80 355.64,247.88 355.27,247.28 354.43,245.98 353.17,244.66 353.55,244.75 354.21,244.32 355.18,243.24 356.27,242.42 357.18,242.37 357.71,242.44 357.90,242.05 357.97,241.42 357.91,240.60 358.38,239.51 359.07,238.61 359.43,238.27 359.26,237.57 358.91,236.65 358.91,236.15 359.32,235.41 359.81,234.40 359.92,233.93 359.50,233.60 358.92,232.87 358.68,232.36 359.96,231.69 361.32,230.82 362.14,230.60 362.27,230.87 362.17,230.26 362.44,229.08 363.17,228.30 364.12,227.74 364.86,227.37 365.19,227.33 365.32,226.98 365.74,225.84 366.76,224.84 368.19,224.81 369.37,224.99 369.99,224.65 370.06,224.15 369.97,223.51 370.17,222.56 370.79,222.04 371.58,222.26 372.17,222.12 372.72,221.30 373.19,220.27 373.69,219.63 374.48,219.38 375.66,219.18 376.95,218.88 377.84,218.38 378.11,217.64 377.97,216.80 377.95,216.60 378.53,217.00 379.73,216.80 381.13,215.72 382.24,214.87 382.85,214.75 383.16,214.68 383.52,214.36 384.07,213.86 384.77,212.99 385.45,212.01 386.03,211.74 386.55,212.08 387.14,211.85 387.90,210.82 388.77,209.88 389.89,209.53 390.76,209.19 391.07,209.13 391.03,208.89 391.20,207.70 391.90,207.07 392.56,207.31 393.48,208.08 394.99,208.35 396.47,207.69 397.13,206.77 397.18,206.42 397.29,206.70 397.69,206.64 398.30,205.80 399.19,204.80 400.50,204.37 400.19,204.25 399.92,203.50 399.32,202.33 398.74,201.34 398.69,200.62 399.29,199.89 400.04,199.82 400.51,200.10 400.54,199.71 400.42,198.94 400.58,198.31 401.15,197.39 401.95,196.45 402.31,196.19 402.11,195.52 401.92,194.63 402.55,194.36 403.58,193.43 404.63,192.24 405.35,191.81 405.70,192.01 405.95,191.90 406.49,191.41 407.55,190.98 408.64,190.42 409.38,189.90 409.63,189.88 409.63,190.19 409.78,189.94 410.35,188.84 411.54,187.88 412.85,187.84 414.16,188.06 415.31,187.53 415.38,186.60 415.18,185.88 415.29,184.78 415.94,183.95 416.76,183.81 417.19,183.32 416.77,182.15 416.18,181.58 415.87,181.29 416.01,180.80 416.38,180.39 416.54,180.00 416.20,178.99 417.37,179.13 417.97,178.84 418.58,178.53 418.92,178.62 419.09,179.20 420.17,179.96 421.63,180.43 422.41,180.40 423.05,180.04 423.11,179.39 423.40,179.61 424.15,179.11 425.09,178.07 425.60,177.42 425.68,176.60 425.76,176.17 426.34,176.39 427.43,176.05 428.55,175.08 429.17,174.25 429.87,173.74 430.07,173.41 430.20,173.47 430.69,173.59 431.58,173.14 432.55,172.06 433.36,171.09 434.09,170.93 434.89,171.20 435.66,170.93 436.26,169.85 436.75,168.93 437.35,168.81 438.17,169.02 439.01,168.89 439.55,168.41 439.88,167.83 440.87,168.18 442.06,168.98 442.45,169.82 442.35,170.32 442.83,170.38 443.61,170.22 444.38,170.17 444.13,169.23 444.30,168.05 444.99,167.49 445.73,167.40 446.02,166.92 445.83,166.52 445.66,166.21 445.97,165.10 446.68,163.82 447.29,162.87 447.38,161.61 446.54,160.75 445.88,160.63 445.88,160.40 446.46,159.44 447.03,158.30 447.04,157.39 446.44,156.49 445.65,155.78 445.10,155.64 444.91,155.40 445.57,154.67 446.18,154.01 446.37,153.66 446.16,152.84 445.95,151.71 446.16,150.96 446.79,150.11 447.45,148.97 447.70,148.35 446.85,148.38 446.49,147.82 446.41,146.65 446.17,145.52 445.90,145.04 445.83,145.07 445.63,144.97 444.91,144.28 444.05,143.21 443.59,142.29 443.37,141.79 442.90,141.54 442.41,141.14 442.23,140.36 441.95,139.29 441.36,138.26 441.07,137.48 441.26,136.95 441.22,136.45 440.65,135.73 440.04,134.77 439.54,133.58 438.98,132.64 438.36,132.36 438.07,132.28 438.16,131.57 438.14,130.18 437.65,128.96 437.09,128.55 436.80,128.51 436.43,128.06 435.86,127.08 435.64,126.05 435.87,125.35 435.91,124.78 435.48,124.32 434.94,124.04 434.70,123.47 434.72,122.26 434.61,120.96 434.16,120.37 434.88,119.83 435.07,119.24" fill="#a6d4fa" stroke="none"/>
<polygon points="442.09,209.49 442.59,209.13 443.04,208.35 443.72,207.71 444.57,207.44 445.75,207.68 446.47,207.88 447.18,208.35 447.56,209.15 447.56,209.96 448.22,210.33 449.47,210.13 450.14,209.84 450.53,210.11 450.87,211.14 451.02,212.17 451.60,212.91 453.06,212.89 454.24,212.27 454.90,211.71 455.61,211.81 455.92,212.73 456.15,213.94 457.13,214.90 458.44,215.24 459.13,215.03 459.50,214.69 459.90,214.73 459.96,215.34 460.12,216.33 461.30,217.13 462.58,217.52 463.17,217.31 463.62,216.69 464.12,216.20 464.39,216.27 465.03,216.96 466.44,217.85 467.62,218.38 468.12,218.24 468.65,217.71 469.16,217.32 469.59,217.63 470.85,218.61 472.21,219.72 472.80,220.02 473.16,219.56 473.54,218.80 473.80,218.61 474.43,218.87 475.63,219.00 476.77,218.74 477.51,218.35 478.14,218.22 478.87,218.40 479.43,218.62 479.94,218.89 481.00,218.43 482.25,217.69 482.65,217.33 482.71,217.68 483.27,218.47 483.95,219.12 484.88,219.94 486.34,220.19 487.43,220.20 487.51,220.53 487.36,221.36 487.45,222.29 486.77,223.27 486.49,224.59 486.68,225.42 486.88,225.78 486.60,226.54 485.91,227.16 485.33,227.54 485.31,228.52 485.76,229.50 486.11,230.04 486.08,230.90 485.73,231.68 485.52,231.94 485.77,232.61 486.25,233.71 486.46,234.49 486.10,235.49 485.44,236.71 485.03,237.23 485.15,237.44 485.74,237.95 486.08,238.46 485.95,239.12 485.81,240.24 486.04,241.58 486.48,242.40 486.83,242.51 487.20,242.75 487.74,243.80 487.36,243.67 486.75,243.61 485.65,244.07 484.09,244.99 482.71,245.77 482.11,245.92 482.12,245.70 482.12,245.88 481.80,246.72 481.24,247.57 480.43,247.65 479.18,247.03 477.68,246.64 476.66,247.26 476.29,248.22 476.44,248.67 476.64,248.54 476.43,248.45 475.66,248.76 474.55,249.31 473.44,249.93 472.56,250.55 471.93,250.91 472.25,251.59 472.43,252.03 472.14,252.93 471.47,253.80 470.86,254.19 470.71,254.83 470.95,255.70 471.17,256.12 470.99,256.60 470.42,257.54 470.38,258.57 470.64,259.44 471.05,260.46 471.30,261.12 471.20,261.12 470.86,261.41 470.56,262.45 470.60,263.50 471.01,264.37 471.45,265.32 471.62,265.99 471.28,266.22 470.74,267.01 470.57,268.07 470.95,268.95 471.51,270.38 471.65,271.84 471.19,272.52 470.36,272.94 469.90,273.34 469.92,273.22 470.03,273.34 469.77,274.13 469.04,274.78 468.22,275.40 467.78,276.44 467.04,276.70 466.38,276.35 465.72,276.62 464.98,277.74 464.16,278.72 463.41,279.13 462.95,279.37 462.80,279.61 462.56,279.93 461.95,280.65 460.66,281.21 459.48,281.20 458.94,280.78 458.41,280.47 457.55,280.53 456.76,280.65 455.95,280.47 454.66,279.94 453.61,279.71 453.47,279.99 453.25,280.57 452.55,280.94 451.85,280.68 450.81,279.92 449.89,278.82 449.24,278.26 449.20,278.24 449.70,277.93 450.31,277.09 450.56,276.20 450.34,275.35 449.89,274.25 449.66,273.31 449.85,273.04 450.41,272.84 450.83,272.07 450.74,271.07 450.15,270.21 449.43,269.06 449.06,267.77 449.20,267.14 449.64,266.97 449.95,266.52 449.88,265.99 449.53,265.63 449.25,264.86 449.40,263.73 449.91,263.03 450.38,262.65 450.47,261.98 450.23,261.45 450.04,261.19 450.24,260.33 450.82,258.97 451.36,257.87 451.44,256.71 451.01,255.35 450.46,254.63 449.98,254.49 450.06,254.09 450.49,253.43 450.80,252.85 450.64,251.99 450.12,250.79 449.68,250.05 449.71,250.00 450.22,249.81 450.78,249.25 450.88,248.71 450.34,247.96 449.48,246.78 448.80,245.77 448.65,245.45 448.96,245.26 449.36,244.66 449.44,243.93 449.12,243.19 448.68,242.03 448.55,240.64 448.94,239.81 449.65,239.52 450.16,239.09 450.04,238.30 449.31,237.49 448.40,236.52 447.76,235.21 447.57,234.16 447.63,233.84 447.68,233.69 447.56,232.99 447.36,231.95 447.21,231.02 447.18,230.06 446.50,229.77 445.35,230.24 444.52,230.73 444.32,229.81 444.39,228.74 444.75,227.82 445.18,226.99 445.23,226.30 444.69,225.98 443.82,225.79 443.16,225.08 442.96,223.75 442.95,222.55 442.77,222.04 442.37,221.85 442.00,221.42 441.83,220.75 441.83,220.00 441.84,219.06 442.04,217.82 442.29,216.95 442.36,216.78 442.06,216.49 441.44,215.57 440.81,214.55 440.82,213.58 441.21,212.29 441.55,211.33 441.49,211.16 441.16,210.87 441.02,210.40 441.39,210.19" fill="#81b1e3" stroke="none"/>
<polygon points="446.02,287.87 445.78,287.08 445.74,286.52 446.26,285.43 447.05,284.43 447.51,284.03 447.41,283.31 447.15,282.57 447.27,282.50 447.98,281.51 449.10,280.21 450.14,279.86 450.81,279.92 451.85,280.68 452.55,280.94 453.25,280.57 453.47,279.99 453.61,279.71 454.66,279.94 455.95,280.47 456.76,280.65 457.55,280.53 458.41,280.47 458.94,280.78 459.48,281.20 460.66,281.21 461.95,280.65 462.56,279.93 462.80,279.61 462.95,279.37 463.41,279.13 464.16,278.72 464.98,277.74 465.72,276.62 466.38,276.35 467.04,276.70 467.78,276.44 468.22,275.40 469.04,274.78 469.77,274.13 470.03,273.34 469.92,273.22 469.90,273.34 470.36,272.94 471.19,272.52 471.65,271.84 471.51,270.38 470.95,268.95 470.57,268.07 470.74,267.01 471.28,266.22 471.62,265.99 471.45,265.32 471.01,264.37 470.60,263.50 470.56,262.45 470.86,261.41 471.20,261.12 471.30,261.12 471.05,260.46 470.64,259.44 470.38,258.57 470.42,257.54 470.99,256.60 471.17,256.12 470.95,255.70 470.71,254.83 470.86,254.19 471.47,253.80 472.14,252.93 472.43,252.03 472.25,251.59 471.93,250.91 472.56,250.55 473.44,249.93 474.55,249.31 475.66,248.76 476.43,248.45 476.64,248.54 476.44,248.67 476.29,248.22 476.66,247.26 477.68,246.64 479.16,247.05 480.39,247.69 481.23,247.70 481.86,246.90 482.21,245.98 482.16,245.68 482.09,245.94 482.68,246.03 484.01,245.43 485.45,244.48 486.51,243.95 487.30,244.16 487.92,244.63 488.16,245.79 488.06,246.48 488.31,246.63 489.15,246.65 489.91,247.02 490.22,247.84 490.56,248.75 491.01,249.29 491.26,249.39 491.49,249.40 492.19,249.83 493.13,250.78 493.60,251.86 493.53,252.64 493.46,253.07 493.49,253.43 493.41,254.05 493.64,255.07 494.78,256.24 496.20,257.15 497.08,257.66 497.60,258.00 497.97,258.51 497.80,259.29 497.13,260.31 496.90,261.41 497.45,262.26 498.42,262.49 499.13,262.73 499.28,263.80 499.08,265.22 498.85,266.16 498.32,266.64 498.32,267.19 498.50,267.21 498.34,267.27 497.66,268.06 496.85,268.75 496.44,269.31 496.53,270.26 496.70,270.82 497.50,271.67 497.60,272.43 497.68,272.75 498.49,272.58 499.41,272.32 499.99,272.48 500.59,273.30 500.95,274.52 500.66,275.62 500.88,276.16 502.01,276.08 503.09,275.62 503.95,275.37 504.86,275.73 505.16,276.63 505.34,277.53 506.48,277.88 507.86,277.54 508.82,276.93 509.79,276.69 510.11,277.52 509.96,278.66 510.54,279.55 511.64,279.94 512.29,280.04 512.81,280.25 513.21,280.69 513.03,281.14 513.18,281.47 514.26,281.51 515.39,281.72 516.21,282.52 517.08,283.80 517.61,284.98 517.58,285.59 517.82,285.73 518.62,285.93 519.31,286.55 519.61,287.55 519.95,288.44 520.26,288.79 520.16,288.61 520.18,288.40 520.98,288.70 522.12,289.66 522.91,290.87 522.62,291.71 521.77,292.67 520.92,294.11 520.63,294.85 520.78,295.14 520.75,295.59 520.12,295.52 519.14,295.65 518.36,296.56 518.02,297.44 517.95,297.96 517.73,298.56 517.09,298.95 516.16,298.87 515.36,299.24 515.03,300.38 515.39,301.75 515.65,303.04 515.30,304.50 514.64,305.01 514.34,305.30 514.20,305.66 514.23,305.73 514.01,306.07 513.37,307.14 512.57,308.08 512.04,308.38 511.98,308.66 512.20,308.94 512.22,308.92 511.72,308.63 510.35,308.68 509.12,308.50 508.36,307.79 507.64,306.83 507.27,306.20 507.37,306.12 506.61,306.12 505.21,305.75 504.23,305.21 503.71,304.81 503.18,304.68 502.99,304.71 502.89,304.70 502.85,305.26 502.55,305.30 501.66,305.63 500.40,306.85 499.30,307.97 498.74,308.62 498.59,309.27 498.26,308.86 498.01,308.58 497.45,308.82 496.78,309.45 496.09,310.01 495.02,310.16 493.56,310.04 492.51,310.14 492.23,310.79 492.30,311.81 492.04,312.26 491.22,311.91 490.16,311.82 489.19,312.71 488.23,313.38 487.06,313.42 486.22,312.82 486.06,312.30 486.06,312.56 485.55,313.46 484.59,314.22 483.52,314.26 482.26,313.86 481.06,313.44 480.36,312.84 480.48,312.24 480.32,311.95 479.69,312.05 479.13,312.24 478.28,312.09 477.31,311.35 476.60,310.78 476.24,310.62 475.53,311.05 474.53,311.57 473.73,311.66 473.03,311.42 472.18,311.46 471.56,312.14 471.43,313.08 471.13,313.61 470.12,313.11 468.87,312.23 467.76,311.56 466.50,311.44 465.86,311.73 465.76,311.95 464.93,311.74 463.64,311.12 462.78,310.36 461.85,309.80 461.31,309.67 461.45,309.84 460.98,309.96 459.79,309.67 458.88,308.96 458.42,307.99 457.95,307.03 457.99,306.50 458.12,306.47 457.50,306.59 456.37,306.45 455.45,305.87 454.59,305.08 453.76,304.32 453.34,303.72 453.60,303.33 454.12,303.00 454.32,302.32 454.08,301.11 453.65,299.85 453.12,299.20 452.37,299.14 451.42,298.87 451.08,297.91 451.29,296.44 451.12,295.22 450.49,294.76 449.98,294.78 449.49,294.56 448.72,293.69 448.22,292.44 448.14,291.62 448.03,291.46 447.54,291.47 447.03,291.10 446.86,290.24 446.74,289.27 446.37,288.57 446.05,288.17" fill="#81b1e3" stroke="none"/>
<polygon points="407.65,283.65 408.85,283.47 410.21,282.71 411.22,281.84 411.59,281.41 411.62,281.43 411.86,281.55 412.50,281.47 413.36,281.15 414.27,280.73 415.30,280.39 416.42,280.37 417.36,280.63 417.81,280.75 417.88,280.30 418.03,279.42 418.64,278.82 419.62,278.92 420.63,279.26 421.46,279.03 422.21,278.06 422.97,277.09 423.62,276.83 423.99,277.13 424.26,277.18 424.71,276.61 425.50,275.82 426.44,275.28 427.21,275.07 427.67,275.01 428.05,274.93 428.65,274.68 429.53,274.08 430.44,273.29 431.28,272.42 431.79,272.35 431.82,272.34 431.60,271.61 431.59,270.67 432.11,270.00 433.10,269.29 434.14,268.84 434.85,269.04 435.17,269.10 435.23,268.29 435.68,267.47 436.57,266.91 437.50,266.12 438.00,265.68 438.03,265.83 438.00,265.51 438.53,265.91 439.16,266.02 439.49,266.45 439.25,267.54 438.87,268.85 438.92,269.66 439.36,269.78 439.83,269.77 440.30,270.26 441.00,271.28 441.77,272.33 442.11,272.96 442.01,273.19 442.03,273.39 442.44,273.82 442.92,274.50 443.16,275.47 443.61,276.53 444.33,277.40 444.82,277.66 444.61,277.76 443.98,278.59 443.66,280.04 444.66,280.79 445.50,281.29 446.24,281.55 447.01,281.88 446.97,281.93 447.25,282.53 447.39,283.30 447.07,283.87 446.39,284.91 445.83,286.30 445.72,286.97 445.95,287.53 445.99,288.27 445.98,288.52 446.33,289.11 446.60,290.12 446.77,291.13 447.30,291.60 447.96,291.54 448.16,291.63 448.21,292.42 448.72,293.69 449.49,294.56 449.98,294.78 450.49,294.76 451.12,295.22 451.29,296.44 451.08,297.91 451.42,298.87 452.37,299.14 453.19,299.22 453.86,299.82 454.57,301.04 454.92,302.29 454.54,302.95 453.94,302.97 453.92,302.95 454.47,303.47 454.80,304.78 455.26,305.74 455.44,306.75 455.19,307.85 454.77,308.29 454.64,308.32 455.02,308.74 454.65,309.08 454.20,309.50 453.41,310.50 452.37,311.56 451.45,311.68 450.94,311.40 450.82,311.71 451.10,312.30 450.93,312.89 450.32,314.17 449.72,315.56 449.57,316.41 448.95,315.60 448.69,314.59 448.03,314.14 446.43,314.56 445.37,315.34 444.81,314.99 444.22,314.22 444.00,313.37 443.97,312.79 443.34,312.44 442.49,311.93 442.27,310.97 442.25,309.85 442.05,308.96 441.97,308.64 441.82,308.81 440.89,309.01 439.50,308.77 438.57,308.00 437.99,307.17 437.32,306.48 436.95,306.11 436.45,305.85 435.11,305.38 433.98,304.69 433.65,304.10 433.34,303.97 432.99,304.38 432.75,304.54 431.68,304.14 430.31,303.34 429.71,302.56 429.33,302.20 428.80,302.27 428.46,302.48 427.56,302.42 425.97,301.92 425.04,301.10 424.67,300.34 424.09,300.01 423.67,300.15 422.95,300.40 421.49,300.30 420.60,299.67 420.48,298.64 420.18,297.74 419.89,297.47 419.50,297.83 418.31,298.28 417.24,298.19 417.04,297.33 416.78,296.09 416.31,295.15 416.55,294.49 416.48,294.28 415.79,294.09 414.68,293.29 413.76,291.96 413.42,290.81 413.59,290.30 413.93,290.09 414.25,289.67 414.33,289.05 414.29,288.16 413.55,287.29 412.33,286.77 411.48,286.63 411.12,286.60 410.73,286.31 410.28,285.72 410.06,284.87 409.48,284.17 408.36,283.85" fill="#5f8ecd" stroke="none"/>
<polygon points="397.46,241.85 396.47,242.43 395.85,242.88 395.54,242.77 395.20,242.77 394.50,243.72 393.46,244.92 392.42,245.50 391.75,245.83 391.54,246.18 391.50,246.35 391.27,246.85 390.69,248.03 389.88,248.99 389.41,249.34 389.45,249.88 389.63,250.46 389.45,250.70 388.77,251.49 387.99,252.77 387.60,253.64 387.71,254.49 387.88,255.38 387.63,255.53 386.92,255.49 386.35,256.01 386.13,256.48 386.37,257.00 386.77,258.21 386.89,259.64 386.57,260.55 386.03,261.38 385.68,262.33 385.72,262.80 386.00,263.12 386.13,264.05 385.90,265.10 385.68,265.93 385.69,266.83 386.05,267.68 386.59,267.85 386.98,267.78 386.98,268.33 386.62,269.23 386.21,269.97 386.05,270.86 386.22,271.83 386.52,272.18 386.68,272.20 386.61,272.82 386.46,273.86 386.22,274.77 386.41,275.99 386.97,277.48 387.47,278.36 387.49,278.83 387.02,279.56 386.45,280.12 386.23,280.42 386.47,281.23 386.85,282.34 386.92,283.00 386.51,283.61 385.96,284.43 385.55,284.75 385.50,284.83 385.67,285.58 385.73,286.68 385.52,287.62 385.18,288.78 385.09,290.05 385.44,290.62 386.44,290.06 387.42,289.64 388.41,289.85 388.69,290.73 388.72,291.78 389.55,292.40 390.70,292.29 391.54,291.72 392.44,291.24 393.09,291.32 393.09,291.95 393.44,292.90 394.71,293.43 395.77,293.28 396.69,292.74 397.54,292.43 397.70,292.77 398.20,293.63 399.27,293.15 400.14,292.55 400.59,291.40 400.83,290.38 401.22,290.24 401.98,290.33 402.94,289.98 403.74,289.51 404.10,288.95 404.12,287.96 404.15,287.16 404.63,287.23 405.49,287.17 406.27,286.53 406.57,285.89 406.44,285.01 406.36,283.87 406.77,283.50 407.65,283.65 407.93,283.08 408.03,282.02 407.75,280.95 407.35,280.10 407.13,279.40 407.01,278.87 406.75,278.57 406.40,278.16 406.22,277.18 406.19,275.83 405.97,274.84 405.43,274.61 404.89,274.54 404.75,273.93 404.86,272.82 404.74,271.76 404.24,270.99 403.64,270.40 403.17,269.94 402.73,269.63 402.24,269.08 402.00,268.06 402.26,266.86 402.62,266.09 402.46,265.97 401.87,266.01 401.31,265.50 400.86,264.35 400.25,263.15 399.62,262.61 399.42,262.56 399.65,262.34 399.70,261.65 399.25,260.73 398.59,259.87 398.05,259.16 397.52,258.64 397.22,257.89 397.33,257.46 397.92,256.44 398.55,255.23 398.75,254.45 398.55,253.43 398.43,252.46 398.83,252.22 399.59,251.94 400.18,251.36 400.15,250.88 399.49,250.18 398.66,248.82 398.20,247.54 398.26,246.96 398.33,246.63 398.14,246.09 397.61,245.46 397.14,244.67 397.04,243.43 397.24,242.25" fill="#3967b0" stroke="none"/>
<polygon points="366.83,270.20 366.30,271.36 365.67,272.28 365.39,272.45 365.53,272.78 365.68,273.33 365.41,273.63 364.76,274.48 364.20,275.98 364.18,277.15 364.64,278.22 365.34,279.24 365.65,279.70 365.52,279.77 365.30,280.35 365.43,281.51 366.00,282.55 366.67,283.34 366.97,284.16 366.66,284.68 365.92,284.66 365.16,284.79 364.80,285.47 364.94,286.07 365.26,286.67 365.31,287.80 364.93,288.87 364.38,289.41 364.09,290.12 364.24,291.04 364.56,291.69 364.58,292.39 364.05,293.46 363.33,294.05 362.99,294.62 363.18,295.67 363.48,296.35 363.33,296.96 362.69,298.03 362.06,298.66 361.92,299.03 361.84,299.68 361.76,299.84 361.30,299.63 360.47,300.06 359.68,301.00 359.31,301.81 359.39,302.84 359.53,303.98 359.28,304.41 358.59,304.58 357.79,305.31 357.32,306.19 357.38,307.02 357.57,308.18 357.41,309.24 356.77,309.54 355.99,309.76 355.55,310.12 355.47,310.61 355.83,311.39 357.01,312.27 358.21,312.89 358.99,313.04 359.75,312.91 360.31,312.96 360.32,313.49 360.42,314.42 361.19,315.33 362.51,316.00 363.25,316.34 363.95,316.34 364.25,316.25 364.26,316.37 365.18,316.79 366.50,317.37 367.22,317.83 367.88,318.00 367.73,318.18 367.32,318.93 367.17,320.30 367.87,321.53 369.14,322.00 370.20,322.00 370.77,322.33 371.06,323.30 371.06,324.46 370.63,325.27 370.12,325.69 370.63,325.43 371.82,325.35 372.60,325.94 373.27,327.07 373.92,328.13 373.88,327.84 374.17,327.31 374.81,326.76 375.54,325.81 376.08,324.61 376.34,324.09 376.58,324.21 377.09,323.90 378.11,323.17 379.35,322.50 380.25,321.50 380.56,320.49 380.56,320.37 380.75,320.39 381.17,320.88 381.82,320.78 382.41,320.30 383.13,319.95 384.55,319.99 386.12,320.22 386.95,320.22 387.33,319.81 387.86,319.31 388.33,319.20 388.76,319.66 389.07,319.69 389.78,319.78 390.92,319.19 392.18,318.13 393.14,317.59 393.55,317.80 393.26,316.65 392.39,315.36 391.35,314.74 390.76,314.72 390.76,314.42 390.95,313.54 390.90,312.51 391.05,312.41 390.94,311.72 391.06,310.75 391.70,309.95 392.61,308.77 393.29,307.61 393.48,307.30 393.41,307.16 392.90,306.65 392.73,306.18 393.11,305.55 393.82,304.41 394.23,303.08 393.88,302.39 392.95,302.34 393.21,302.29 393.87,301.67 394.83,301.09 395.66,300.39 395.95,299.54 395.77,299.41 395.56,299.69 395.79,299.27 396.53,298.40 397.29,297.49 397.44,295.93 397.14,294.59 397.13,293.93 397.77,292.98 397.69,292.46 397.21,292.49 396.32,292.93 395.51,293.37 394.45,293.37 393.36,292.81 393.09,291.95 393.09,291.32 392.44,291.24 391.54,291.72 390.70,292.29 389.55,292.40 388.72,291.78 388.69,290.73 388.41,289.85 387.42,289.64 386.44,290.06 385.44,290.62 384.35,290.43 383.99,289.50 384.27,288.23 384.15,287.26 383.59,286.83 383.18,286.59 382.63,286.02 381.96,284.96 381.69,283.74 381.75,282.97 381.30,282.84 380.39,282.92 379.69,282.57 379.10,281.65 378.41,280.63 378.51,279.82 378.74,279.69 378.82,279.53 378.58,278.74 378.11,277.64 377.75,276.71 377.74,275.83 378.01,274.97 378.13,274.53 377.77,274.43 376.71,274.27 376.27,273.48 376.27,272.47 375.79,271.81 375.03,271.63 374.42,271.49 373.58,270.86 372.40,269.71 372.11,268.70 372.04,268.33 371.31,268.63 370.49,269.10 369.62,269.11 368.28,268.97 367.32,268.47 367.07,268.57 367.30,269.32 367.39,270.00" fill="#3967b0" stroke="none"/>
<g opacity="0.55">
<rect x="426" y="130" width="11.5" height="4.800000000000011" rx="0.8" fill="#f7f6df" stroke="#dddbb0" stroke-width="0.5"/>
<text x="431.75" y="133.73" font-size="3.7" text-anchor="middle" fill="#666660">LA 38</text>
</g>
<polyline points="420.44,120.33 420.31,120.77 420.18,121.52 420.25,122.47 420.50,123.30 420.73,124.11 420.71,124.94 420.43,125.47 420.07,125.80 419.92,126.38 420.10,127.20 420.49,127.95 420.83,128.73 420.93,129.59 420.81,130.18 420.70,130.54 420.80,131.14 421.13,131.99 421.54,132.80 421.71,133.62 421.63,134.49 421.48,135.20 421.48,135.63 421.72,136.09 422.10,136.89 422.50,137.90 422.84,138.77 423.09,139.45 423.18,140.12 423.11,140.73 422.96,141.24 422.90,141.90 423.08,142.88 423.45,143.91 423.82,144.60 424.01,145.07 424.09,145.61 424.23,146.30 424.57,147.02 425.04,147.83 425.42,148.75 425.57,149.54 425.56,150.00 425.51,150.37 425.53,151.03 425.61,151.98 425.81,152.86 426.18,153.55 426.70,154.18 427.15,154.77 427.31,155.27 427.16,155.83 426.96,156.71 426.98,157.74 427.46,158.34 428.03,158.63 428.62,158.83 429.35,159.25 430.06,160.00 430.44,160.88 430.46,161.61 430.48,162.05 430.69,162.37 430.95,162.86 431.28,163.64 431.86,164.59 432.60,165.42 433.13,165.97 433.38,166.34 433.61,166.79 433.96,167.45 434.37,168.26 434.77,168.98 435.40,169.44 436.05,169.66 436.38,169.92 436.60,170.45 437.06,171.24 437.62,172.04 438.15,172.61 438.84,172.98 439.57,173.40 439.92,174.10 439.97,175.06 439.95,175.99 440.09,176.62 440.34,177.07 440.74,177.59 441.39,178.27 442.14,179.04 442.66,179.85 442.78,180.64 442.70,181.31 442.71,181.79 442.86,182.20 443.09,182.85 443.46,183.80 444.04,184.74 444.67,185.35 445.03,185.68 445.03,186.11 444.94,186.85 445.01,187.74 445.25,188.53 445.59,189.15" fill="none" stroke="#1a6dcd" stroke-width="0.95" stroke-linejoin="round" stroke-linecap="round"/>
<polyline points="439.76,126.07 440.12,126.34 440.51,126.81 441.16,127.57 441.92,128.44 442.38,129.16 442.56,129.66 442.75,130.09 443.01,130.66 443.23,131.46 443.60,132.35 444.34,133.11 445.18,133.66 445.72,134.08 446.02,134.56 446.29,135.19 446.37,135.99 446.30,136.72 446.38,137.36 446.87,137.87 447.56,138.31 448.14,138.82 448.57,139.56 448.97,140.45 449.25,141.20 449.31,141.62 449.36,141.92 449.72,142.47 450.33,143.39 450.87,144.36 451.28,145.03 451.66,145.40 451.96,145.84 452.02,146.57 451.96,147.50 452.16,148.36 452.66,149.03 453.20,149.59 453.67,150.16 454.17,150.82 454.67,151.59 454.93,152.46 454.98,153.31 455.14,153.94 455.56,154.36 456.03,154.84 456.31,155.66 456.64,156.73 457.00,157.58 457.21,158.08 457.13,158.54 456.89,159.21 456.82,160.00 457.14,160.82 457.73,161.71 458.31,162.56 458.71,163.11 458.95,163.49 459.07,164.15 459.09,165.17 458.76,165.88 458.67,166.40 458.65,167.12 458.47,167.84 458.04,168.40 457.53,169.16 457.17,169.99 457.05,170.52 457.01,171.05 456.81,171.68 456.35,172.10 455.81,172.56 455.44,173.36 455.30,174.16 455.26,174.91 455.00,175.87 454.49,176.70 453.90,177.15 453.46,177.63 453.27,178.15 453.14,178.53 452.84,179.15 452.29,180.05 451.65,180.74 451.17,181.31 450.93,181.96 450.76,182.37 450.42,182.72 449.83,183.44 449.16,184.28 448.67,185.01 448.32,185.80 448.07,186.49 447.68,186.81 447.09,187.15 446.41,187.80 445.87,188.47 445.59,189.15" fill="none" stroke="#1a6dcd" stroke-width="0.95" stroke-linejoin="round" stroke-linecap="round"/>
<polyline points="485.19,150.26 484.91,150.93 484.37,151.24 483.75,151.74 483.30,152.48 483.09,153.14 482.90,153.96 482.50,154.83 481.84,155.28 481.14,155.61 480.63,156.14 480.36,156.63 480.10,157.23 479.60,158.14 478.88,158.86 478.18,159.25 477.73,159.73 477.51,160.21 477.30,160.64 476.89,161.44 476.28,162.44 475.69,163.13 475.34,163.74 475.20,164.37 475.04,164.78 474.64,165.30 474.03,166.22 473.32,166.97 472.76,167.46 472.40,167.85 472.09,168.19 471.61,168.43 470.86,168.89 469.93,169.67 469.04,170.28 468.38,170.46 467.97,170.62 467.65,171.06 467.25,171.60 466.68,172.19 466.01,172.89 465.47,173.47 465.12,173.69 464.84,174.04 464.42,174.77 463.77,175.49 463.00,176.10 462.33,176.73 461.87,177.12 461.56,177.24 461.18,177.62 460.57,178.35 459.79,178.96 459.06,179.46 458.58,179.97 458.28,180.20 458.08,180.35 457.78,180.84 457.21,181.67 456.42,182.34 455.58,182.64 454.86,182.91 454.34,183.32 453.91,183.78 453.40,184.33 452.72,185.02 451.92,185.55 451.19,185.68 450.67,185.76 450.35,186.19 450.11,186.88 449.69,187.40 448.93,187.66 447.90,187.90 446.87,188.20 446.08,188.59 445.59,189.15" fill="none" stroke="#1a6dcd" stroke-width="0.95" stroke-linejoin="round" stroke-linecap="round"/>
<polyline points="497.13,157.64 496.83,158.60 496.76,159.27 496.76,159.95 496.60,160.62 496.21,160.96 495.75,161.27 495.45,161.85 495.39,162.40 495.42,162.99 495.30,163.93 494.95,164.93 494.49,165.69 494.17,166.49 494.08,167.26 494.11,167.65 493.79,167.89 493.26,168.41 492.63,168.99 492.08,169.59 491.76,170.37 491.60,171.05 491.38,171.32 490.94,171.54 490.25,172.03 489.51,172.58 488.91,173.14 488.50,173.87 488.14,174.49 487.65,174.73 486.85,174.86 486.06,175.36 485.44,176.00 485.05,176.60 484.79,177.19 484.46,177.66 483.93,177.85 483.21,178.17 482.45,178.93 481.80,179.73 481.30,180.16 480.83,180.42 480.23,180.74 479.55,181.11 478.77,181.56 478.07,182.31 477.61,183.04 477.41,183.36 477.27,183.57 476.97,184.02 476.43,184.57 475.74,185.17 475.09,185.96 474.76,186.96 474.58,187.52 474.25,188.08 473.63,188.83 472.90,189.45 472.38,190.30 472.27,191.22 472.20,191.78 471.94,192.21 471.45,192.74 470.92,193.07 470.59,193.39 470.49,194.12 470.44,194.94 470.19,195.72" fill="none" stroke="#1a6dcd" stroke-width="0.95" stroke-linejoin="round" stroke-linecap="round"/>
<polyline points="510.94,167.10 510.77,168.02 510.85,168.84 511.05,169.57 511.09,170.48 510.88,171.22 510.57,171.79 510.40,172.64 510.45,173.55 510.51,174.35 510.36,175.35 509.90,176.23 509.39,176.73 509.07,177.25 508.99,177.88 508.97,178.31 508.78,178.81 508.35,179.61 507.88,180.32 507.59,180.95 507.55,181.81 507.57,182.58 507.25,182.87 506.69,183.39 506.08,184.16 505.65,184.88 505.44,185.75 505.27,186.64 504.88,187.10 504.23,187.42 503.48,187.99 502.89,188.58 502.53,189.18 501.89,189.89 501.24,190.37 500.55,190.43 499.84,190.53 499.17,191.07 498.62,191.77 498.21,192.24 497.83,192.56 497.33,192.87 496.59,193.17 495.63,193.60 494.64,194.34 493.75,194.82 493.20,194.92 492.91,194.76 492.58,194.76 492.02,195.13 491.25,195.64 490.40,195.90 489.50,195.81 488.56,195.71 487.70,195.96 487.12,196.52 486.84,197.04 486.56,197.28 486.00,197.33 485.15,197.51 484.22,197.93 483.30,198.45 482.36,198.79 481.54,198.88 481.04,198.88 480.81,198.96 480.43,199.15 479.62,199.39 478.64,199.48 477.67,199.45 476.63,199.53 475.68,199.87 475.20,200.13 474.70,200.18 473.74,199.84 472.75,199.24 471.93,198.74 471.11,198.62 470.51,198.84 470.13,199.12 469.52,198.80 468.67,198.25 467.99,197.50 467.50,196.73" fill="none" stroke="#1a6dcd" stroke-width="0.95" stroke-linejoin="round" stroke-linecap="round"/>
<polyline points="445.59,189.15 446.21,189.51 447.13,189.88 447.96,190.43 448.34,191.16 448.52,191.91 448.76,192.53 448.93,193.04 449.14,193.59 449.72,194.31 450.54,195.12 451.02,195.87 451.39,196.35 451.92,196.56 452.44,196.73 453.04,197.11 453.97,197.74 454.86,198.43 455.31,198.97 455.66,199.31 456.08,199.64 456.42,200.18 456.86,200.94 457.46,201.81 458.01,202.52 458.29,202.95 458.53,203.19 458.95,203.51 459.38,204.06 459.82,204.77 460.49,205.43 461.29,205.89 461.80,206.22 462.00,206.62 462.22,207.26 462.51,208.10 462.76,208.94 463.19,209.60 463.95,210.06 464.49,210.53 464.90,211.14 465.03,212.09 464.94,213.09 464.80,213.78 464.72,214.24 464.73,214.79 464.89,215.46 465.20,216.15 465.63,216.96 465.53,217.82 465.25,218.60 465.02,219.13 465.02,219.80 465.19,220.56 465.31,221.14 465.19,221.87 464.84,222.84 464.51,223.64 464.39,224.35 464.46,225.19 464.51,225.81 464.32,226.16 463.92,226.70 463.54,227.29 463.39,227.79 463.45,228.62 463.45,229.67 463.20,230.55 462.74,231.50 462.33,232.49 462.10,233.04 462.06,233.48 461.95,234.10 461.59,234.58 461.07,235.11 460.63,235.99 460.44,236.82 460.43,237.52 460.31,238.39 459.94,239.13 459.43,239.59 459.03,240.23 458.90,240.93 458.90,241.45 458.77,242.16 458.38,243.01 457.87,243.58 457.51,244.17 457.40,244.90 457.43,245.45 457.32,246.05 456.96,246.95 456.51,247.79 456.20,248.51 456.14,249.44 456.18,250.28 456.08,250.83 455.73,251.46 455.28,252.13 454.95,252.57 454.88,253.11 454.90,253.91 454.79,254.58 454.42,255.26 453.95,256.19 453.61,256.97 453.53,257.54 453.65,258.25 453.68,258.94 453.49,259.45 453.23,260.18 453.10,261.09 453.23,261.79 453.49,262.46 453.64,263.28 453.53,263.89 453.22,264.38 452.96,265.16 452.91,266.02 453.00,266.77 453.02,267.73 452.81,268.78 452.43,269.49 452.10,270.06 452.00,270.69 452.08,271.07 452.11,271.36 451.91,272.00 451.49,272.77 451.08,273.49 450.88,274.46 450.91,275.52 450.97,276.27 450.88,276.94 450.61,277.70 450.16,278.23 449.92,278.62 449.92,279.28 449.93,279.92 449.72,280.55 449.29,281.54 448.87,282.58 448.67,283.39" fill="none" stroke="#1a6dcd" stroke-width="0.95" stroke-linejoin="round" stroke-linecap="round"/>
<polyline points="445.17,283.76 446.12,283.67 446.89,283.81 447.32,284.18 447.80,284.56 448.62,284.67 449.49,284.39 450.19,283.93 450.89,283.62 451.55,283.65 451.97,283.92 452.39,284.17 453.21,284.21 454.25,284.07 455.13,283.96 455.78,284.20 456.42,284.44 456.84,284.64 457.22,284.82 458.04,285.01 459.03,285.23 459.78,285.50 460.47,285.78 461.13,286.06 461.57,286.30 462.13,286.51 463.11,286.71 464.08,286.94 464.75,287.21 465.40,287.52 466.02,287.77 466.45,287.99 467.16,288.11 468.22,288.15 469.04,288.24 469.62,288.47 470.24,288.85 470.72,289.24 471.22,289.45 472.15,289.43 473.18,289.31 473.85,289.32 474.44,289.59 475.05,290.08 475.38,290.01 475.78,289.73 476.46,289.30 477.44,288.87 478.51,288.53 479.40,288.31 480.01,288.18 480.44,288.01 480.84,287.64 481.27,287.06 481.75,286.55 482.38,286.36 483.24,286.36 484.28,286.18 485.39,285.79 486.09,285.34 486.50,285.21 486.97,285.44 487.53,285.69 488.10,285.60 488.83,285.16 489.84,284.70 490.80,284.54 491.45,284.62 492.01,284.63 492.75,284.35 493.53,283.93 494.22,283.72 494.96,283.89 495.85,284.40 496.45,284.70 496.77,284.67 497.31,284.44 498.13,284.26 498.95,284.29 499.85,284.48 500.84,284.65 501.55,284.68 502.00,284.62 502.68,284.60 503.63,284.73 504.53,284.93 505.41,285.03 506.31,284.95 506.90,284.81 507.22,284.83 507.80,285.11 508.65,285.56 509.40,285.90 510.11,285.92 510.85,285.63 511.33,285.32 511.63,285.28 512.25,285.58 513.20,286.05 514.06,286.40 514.87,286.48 515.54,286.75 515.98,286.83 516.27,286.94 516.92,287.31 517.82,288.01 518.56,288.84 519.21,289.55 519.86,289.99 520.21,290.21" fill="none" stroke="#1a6dcd" stroke-width="0.95" stroke-linejoin="round" stroke-linecap="round"/>
<polyline points="408.03,283.53 409.05,283.41 410.22,282.99 411.11,282.48 411.63,282.25 412.10,282.43 412.65,282.75 413.19,282.82 413.90,282.57 414.96,282.26 416.11,282.21 416.96,282.36 417.58,282.37 418.25,281.99 418.93,281.57 419.55,281.28 420.36,281.35 421.30,281.74 421.92,282.16 422.23,282.33 422.68,282.21 423.33,281.96 423.98,281.85 424.84,281.93 425.86,282.08 426.60,282.16 427.07,282.14 427.73,282.17 428.62,282.37 429.49,282.70 430.47,282.95 431.53,282.94 432.25,282.68 432.66,282.38 433.22,282.33 433.99,282.60 434.72,282.96 435.48,283.14 436.32,283.01 436.90,282.73 437.21,282.56 437.73,282.59 438.60,282.72 439.47,282.76 440.35,282.65 441.31,282.55 442.05,282.65 442.49,282.95 443.11,283.24 444.05,283.28 444.95,283.03 445.73,282.73" fill="none" stroke="#1a6dcd" stroke-width="0.95" stroke-linejoin="round" stroke-linecap="round"/>
<polyline points="408.03,283.53 407.34,283.68 406.83,284.05 406.53,284.82 406.29,285.59 405.94,286.07 405.39,286.44 404.68,286.81 404.00,287.09 403.48,287.48 403.10,288.21 402.73,288.91 402.17,289.21 401.34,289.31 400.43,289.61 399.64,290.09 399.15,290.61 398.91,291.23 398.73,291.84 398.38,292.14 397.76,292.27 396.86,292.46 395.96,292.93 395.05,293.39 394.07,293.52 393.28,293.28 392.90,292.96 392.63,292.90 392.11,293.18 391.39,293.53 390.65,293.69 389.82,293.62 388.86,293.56 388.03,293.74 387.50,294.13 386.97,294.41 386.17,294.39 385.29,294.13 384.56,293.90 383.85,293.93 383.14,294.18 382.64,294.45 382.28,294.60 381.66,294.66 380.65,294.80 379.61,295.08 378.70,295.36 377.79,295.40 376.99,295.18 376.47,295.27 376.18,295.48 375.83,295.81 375.18,296.22 374.27,296.59 373.27,296.74 372.38,296.76 371.64,297.02 371.04,297.69 370.60,298.39 370.27,298.68 369.89,298.73 369.24,299.02 368.26,299.69 367.16,300.36 366.37,300.80 365.88,301.14 365.57,301.44 365.22,301.69 364.66,302.14 363.93,302.92 363.22,303.52 362.70,303.70 362.38,303.88 362.08,304.37 361.58,304.98 360.79,305.60 359.82,306.28" fill="none" stroke="#1a6dcd" stroke-width="0.95" stroke-linejoin="round" stroke-linecap="round"/>
<polyline points="407.46,284.49 408.08,285.30 408.78,286.15 409.23,287.00 409.32,287.86 409.26,288.55 409.27,288.98 409.39,289.49 409.56,290.38 409.79,291.45 410.10,292.26 410.45,292.82 410.68,293.39 410.75,294.03 410.81,294.69 411.14,295.45 411.59,296.32 411.96,297.11 412.23,297.66 412.62,298.05 413.16,298.55 413.62,299.36 413.85,300.36 414.05,301.22 414.36,301.72 414.68,302.04 414.90,302.52 415.18,303.31 415.67,304.25 416.20,305.01 416.52,305.48 416.66,305.83 416.85,306.29 417.12,306.95 417.35,307.70 417.61,308.39 418.12,308.96 418.84,309.44 419.46,309.87 419.55,310.47 419.49,311.17 419.49,312.16 419.67,313.16 419.91,313.80 420.06,314.23 420.04,314.83 419.92,315.58 419.87,316.33 419.98,317.20 420.25,318.18 420.62,318.93 421.01,319.35 421.33,319.83 421.60,320.59 421.65,321.50 421.53,322.32 421.49,323.05 421.79,323.71 422.35,324.26 422.91,324.74 423.24,325.42 423.40,326.42 423.52,327.40 423.62,328.03 423.66,328.42 423.71,328.95" fill="none" stroke="#1a6dcd" stroke-width="0.95" stroke-linejoin="round" stroke-linecap="round"/>
<polyline points="407.46,216.81 406.83,217.54 406.16,217.96 405.66,218.41 405.34,218.91 405.03,219.31 404.54,219.96 403.83,220.93 403.05,221.72 402.45,222.23 402.10,222.77 401.88,223.24 401.58,223.59 401.07,224.22 400.46,225.12 399.96,225.81 399.69,226.29 399.40,226.45 398.98,226.57 398.40,226.74 397.68,227.11 396.84,227.67 395.93,228.11 395.04,228.22 394.35,228.19 393.94,228.45 393.70,229.08 393.38,229.68 392.72,229.81 391.80,229.71 390.86,229.75 389.98,230.18 389.11,230.76 388.37,231.13 387.94,231.16 387.70,231.09 387.28,231.26 386.48,231.66 385.48,232.02 384.52,232.12 383.67,232.32 382.96,232.62 382.43,233.01 382.04,233.51 381.68,234.16 381.19,234.65 380.51,234.75 379.68,234.78 378.86,235.22 378.19,235.92 377.65,236.39 377.68,237.06 377.47,237.96 377.14,238.71 376.93,239.23 376.98,239.90 377.15,240.53 377.18,240.97 376.95,241.66 376.55,242.58 376.25,243.40 376.17,244.33 376.21,245.45 376.27,246.29 376.17,246.87 375.98,247.47 375.84,248.07 375.85,248.55 376.01,249.18 376.26,250.11 376.48,251.03 376.64,251.63 376.74,252.12" fill="none" stroke="#1a6dcd" stroke-width="0.95" stroke-linejoin="round" stroke-linecap="round"/>
<polyline points="415.63,208.89 415.78,209.26 415.89,209.85 415.91,210.65 415.85,211.42 415.76,212.26 415.73,213.17 415.87,213.85 416.22,214.24 416.71,214.75 417.15,215.61 417.36,216.52 417.33,217.33 417.17,218.18 417.15,218.97 417.31,219.47 417.54,219.93 417.64,220.74 417.52,221.73 417.28,222.59 417.15,223.41 417.31,224.25 417.72,224.84 418.16,225.25 418.39,225.91 418.35,226.84 418.16,227.71 418.06,228.44 418.19,229.19 418.49,229.84 418.77,230.24 418.84,230.68 418.72,231.48 418.58,232.41 418.65,233.17 418.58,233.73 418.67,234.44 418.67,234.94 418.40,235.42 417.98,236.22 417.66,237.03 417.58,237.75 417.64,238.74 417.59,239.69 417.27,240.33 416.94,241.11 416.69,241.85 416.65,242.25 416.78,242.63 416.85,243.27 416.72,243.89 416.43,244.55" fill="none" stroke="#1a6dcd" stroke-width="0.95" stroke-linejoin="round" stroke-linecap="round"/>
<polyline points="435.41,211.73 435.38,212.64 435.56,213.78 435.69,214.67 435.60,215.24 435.37,215.90 435.22,216.47 435.31,216.90 435.51,217.65 435.59,218.60 435.42,219.39 435.12,220.27 434.96,221.22 435.24,221.75 435.59,222.20 435.77,222.94 435.66,223.83 435.34,224.66 435.05,225.55 434.99,226.47 435.21,227.13 435.55,227.52 435.82,228.07 435.91,228.90 435.90,229.72 435.95,230.48 436.17,231.34 436.53,232.06 436.85,232.45 436.96,232.83 436.84,233.52 436.60,234.34 436.43,235.08 436.44,235.86 436.62,236.67 436.84,237.19 436.99,237.53" fill="none" stroke="#1a6dcd" stroke-width="0.95" stroke-linejoin="round" stroke-linecap="round"/>
<polyline points="372.63,252.09 372.96,253.05 373.20,254.03 373.29,254.66 373.21,255.06 373.08,255.60 373.14,256.36 373.52,257.14 374.10,257.97 374.58,258.88 374.75,259.61 374.66,260.02 374.57,260.47 374.65,261.30 374.87,262.31 375.13,263.15 375.41,263.79 375.90,264.33 376.47,264.92 376.83,265.63 377.03,266.45 377.32,267.33 377.69,268.16 377.98,268.79 378.25,269.25 378.70,269.79 379.28,270.64 379.66,271.66 379.80,272.48 379.95,272.93 380.05,273.32 380.24,274.01 380.42,274.95 380.55,275.83 380.69,276.59 380.86,277.33 381.05,277.93 381.27,278.35 381.59,278.94 382.03,279.90 382.50,280.90 382.75,281.59 382.66,282.08 382.37,282.64 382.39,283.24 382.79,283.95 383.36,284.75 383.89,285.55 384.45,286.20 384.98,286.65 385.25,287.04 385.20,287.61 385.21,288.45 385.54,289.32" fill="none" stroke="#1a6dcd" stroke-width="0.95" stroke-linejoin="round" stroke-linecap="round"/>
<polyline points="406.47,257.68 406.81,258.08 406.79,258.82 406.80,259.84 407.01,260.70 407.30,261.16 407.72,261.47 408.37,262.03 409.05,262.91 409.37,263.80 409.36,264.47 409.31,265.01 409.40,265.56 409.61,266.16 409.95,266.84 410.52,267.69 411.26,268.63 411.84,269.35 412.02,269.76 411.90,270.16 411.84,270.92 411.49,272.02 411.42,272.96 411.45,273.98 411.28,275.03 410.84,275.62 410.35,276.11 410.08,276.67 410.06,276.98 410.02,277.47 409.76,278.27 409.31,279.03 408.87,279.83 408.64,280.88 408.62,281.77 408.62,282.35 408.43,282.97 408.03,283.53" fill="none" stroke="#1a6dcd" stroke-width="0.95" stroke-linejoin="round" stroke-linecap="round"/>
<polyline points="417.13,238.75 417.17,239.64 416.94,240.36 416.59,241.24 416.42,241.95 416.48,242.36 416.59,242.98 416.48,243.67 416.16,244.30 415.86,245.30 416.27,246.18 416.57,246.90 416.90,247.29 417.56,247.56 418.38,248.05 418.97,248.87 419.33,249.83 419.64,250.59 419.77,251.09 419.71,251.52 419.89,252.16 420.34,253.01 420.95,253.86 421.47,254.59 421.84,255.24 422.13,255.81 422.30,256.31 422.30,256.87 422.24,257.66 422.42,258.63 422.95,259.45 423.62,259.93 424.15,260.25 424.46,260.81 424.59,261.77 424.65,262.74 424.64,263.49 424.62,264.16 424.75,264.79 425.09,265.34 425.49,265.98 425.73,266.95 425.80,268.02 425.95,268.74 426.32,269.16 426.80,269.71 426.50,270.20 426.04,270.43 425.35,270.71 424.54,271.38 423.80,272.16 423.26,272.67 422.92,273.04 422.59,273.41 422.11,273.66 421.43,273.94 420.69,274.59 420.08,275.40 419.72,275.90 419.48,276.04 419.23,276.25 418.72,276.67 417.88,277.19 416.85,277.78 415.90,278.38 415.22,278.75 414.78,278.85 414.41,279.10 413.92,279.75 413.27,280.48 412.55,280.85 411.90,280.94" fill="none" stroke="#1a6dcd" stroke-width="0.95" stroke-linejoin="round" stroke-linecap="round"/>
<polyline points="443.80,242.47 443.64,243.02 443.66,243.37 443.85,243.98 444.08,244.72 444.21,245.43 444.22,246.31 444.19,247.25 444.24,247.86 444.43,248.27 444.66,248.92 444.78,249.72 444.71,250.50 444.52,251.48 444.36,252.56 444.37,253.28 444.54,253.79 444.76,254.45 444.91,255.24 444.93,255.98 444.91,256.86 444.98,257.93 445.19,258.77 445.49,259.27 445.71,259.79 445.71,260.43 445.52,260.99 445.26,261.64 445.12,262.56 445.16,263.43 445.30,263.95 445.39,264.39 445.35,264.98 445.23,265.51 445.22,266.11 445.43,267.05 445.83,268.07 446.23,268.77 446.44,269.36 446.41,270.06 446.27,270.70 446.19,271.36 446.26,272.38 446.42,273.52 446.50,274.35 446.42,275.02 446.25,275.76 446.19,276.42 446.34,277.07 446.68,278.08 447.04,279.21 447.26,279.97 447.30,280.55 447.24,281.21" fill="none" stroke="#1a6dcd" stroke-width="0.95" stroke-linejoin="round" stroke-linecap="round"/>
<polyline points="516.08,205.30 515.06,205.58 514.32,205.50 513.65,205.15 512.86,204.94 512.10,205.14 511.39,205.62 510.51,205.99 509.58,206.05 509.72,206.34 509.72,206.77 509.49,207.51 509.17,208.22 508.99,209.07 509.05,210.23 509.19,211.23 509.18,212.00 508.91,212.84 508.54,213.49 508.33,213.85 508.36,214.39 508.60,215.13 508.70,215.78 508.55,216.59 508.27,217.58 508.06,218.31 508.04,218.88 508.10,219.63 508.02,220.30 507.71,220.90 507.30,221.82 507.04,222.84 507.08,223.59 507.29,224.34 507.42,225.07 507.53,225.50 507.46,225.89 507.44,226.62 507.66,227.54 508.09,228.35 508.50,229.14 508.66,229.92 508.51,230.46 508.26,230.86 508.16,231.57 508.35,232.58 508.72,233.48 509.07,234.24 509.25,235.02 509.37,235.61 509.48,236.06 509.61,236.66 509.73,237.63 509.84,238.65 509.99,239.37 510.18,239.87 510.33,240.44 510.38,241.08 510.39,241.73 510.58,242.54 511.04,243.53 511.67,244.35 512.16,244.81 512.30,245.19" fill="none" stroke="#1a6dcd" stroke-width="0.95" stroke-linejoin="round" stroke-linecap="round"/>
<polyline points="526.91,197.35 527.05,197.89 527.34,198.28 527.73,198.90 528.25,199.88 528.83,200.87 529.24,201.54 529.29,201.98 529.10,202.50 529.00,203.18 529.16,203.92 529.51,204.73 529.85,205.60 530.14,206.33 530.46,206.77 530.78,207.14 530.79,207.92 530.85,208.96 531.02,209.86 531.22,210.65 531.32,211.48 531.25,212.10 531.08,212.56 530.95,213.33 531.00,214.36 531.22,215.26 531.47,216.05 531.63,216.88 531.65,217.46 531.61,217.86 531.48,218.45 531.54,219.24 531.62,219.90 531.52,220.65 531.20,221.61 530.82,222.36 530.61,222.94 530.66,223.70 530.81,224.45 530.83,225.04 530.61,225.84 530.26,226.80 530.00,227.54 529.95,228.20 530.02,228.95 530.01,229.45 529.78,229.74 529.25,230.29 528.79,230.97 528.60,231.59 528.57,232.50 528.41,233.46 527.98,234.11 527.42,234.84 527.00,235.62 526.85,236.16 526.79,236.86 526.57,237.77 526.09,238.47 525.54,239.15 525.18,239.94 525.07,240.41 524.91,240.68 524.58,241.19 524.03,241.71 523.45,242.29 523.07,243.22 522.93,244.09 522.83,244.60 522.53,245.14 521.99,245.74 521.39,246.21 520.97,246.93" fill="none" stroke="#1a6dcd" stroke-width="0.95" stroke-linejoin="round" stroke-linecap="round"/>
<polyline points="547.48,225.11 547.30,226.12 547.36,226.87 547.38,227.26 547.16,227.76 546.74,228.25 546.40,228.61 546.31,229.35 546.40,230.30 546.39,231.12 546.10,232.13 545.65,233.13 545.33,233.72 545.02,234.16 544.81,234.68 544.46,235.03 543.85,235.57 543.14,236.47 542.58,237.22 542.29,237.82 542.09,238.49 541.75,238.96 541.17,239.29 540.51,240.00 539.92,240.57 539.59,241.04 539.35,241.34 538.98,241.57 538.41,241.74 537.65,241.94 536.83,242.38 536.02,243.08 535.28,243.64 534.66,243.81 534.14,243.90 533.70,244.35 533.24,245.09 532.68,245.72 531.98,246.02 531.16,246.18 530.41,246.39 529.81,246.73 529.25,247.14 528.59,247.53 527.85,247.80 527.16,247.88 526.57,247.86 525.97,247.97 525.25,248.35 524.48,248.82 523.80,249.06 523.14,248.84 522.47,248.69 521.73,248.85 521.11,249.32 520.59,249.82 519.88,250.09 518.86,250.10 517.81,250.07 517.01,250.21 516.37,250.49 515.78,250.70 515.34,250.65 515.03,250.40 514.55,250.20 513.69,250.27 512.67,250.59 511.81,250.93" fill="none" stroke="#1a6dcd" stroke-width="0.95" stroke-linejoin="round" stroke-linecap="round"/>
<polyline points="489.77,228.18 490.03,228.51 490.38,229.07 491.05,229.97 491.85,230.98 492.39,231.78 492.71,232.23 493.09,232.56 493.47,233.11 493.70,233.96 494.01,234.88 494.52,235.54 495.18,235.64 495.46,235.64 495.79,235.82 496.29,236.32 496.80,237.04 497.54,237.73 498.54,238.23 499.28,238.57 499.70,238.93 500.23,239.41 500.84,239.96 501.42,240.40 502.14,240.75 502.94,240.95 503.36,241.29 503.46,241.97 503.64,242.92 503.91,243.83 504.18,244.44 504.70,244.78 505.51,245.12 506.17,245.69 506.55,246.48 506.99,247.27 507.54,247.80 508.00,248.03 508.45,248.23 509.08,248.67 509.64,249.43 509.84,250.28 509.88,250.96" fill="none" stroke="#1a6dcd" stroke-width="0.95" stroke-linejoin="round" stroke-linecap="round"/>
<polyline points="497.65,251.82 498.39,252.54 498.98,253.41 499.61,254.11 500.06,254.47 500.69,254.61 501.69,254.80 502.50,255.20 502.97,255.78 503.45,256.34 503.82,256.77 504.16,257.10 504.93,257.48 505.53,258.14 505.86,258.99 506.12,259.74 506.53,260.18 506.92,260.39 507.36,260.65 508.15,261.19 509.10,261.97 509.74,262.74 510.10,263.32 510.43,263.73 510.63,264.20 510.72,264.91 510.82,265.82 511.27,266.77 511.85,267.43 512.31,267.79 512.62,268.23 512.86,269.04 512.98,270.04 512.93,270.88 512.89,271.44 513.16,271.94 513.80,272.52 514.42,273.16 514.88,273.85 515.09,274.72 515.13,275.62 515.10,276.24 515.07,276.59 515.07,277.04 515.16,277.81 515.40,278.70 515.77,279.49 516.09,280.20 516.29,280.92 516.33,281.47 516.43,281.94 516.76,282.66 517.18,283.71 517.47,284.69 517.54,285.30" fill="none" stroke="#1a6dcd" stroke-width="0.95" stroke-linejoin="round" stroke-linecap="round"/>
<polyline points="509.88,250.96 509.95,251.44 510.23,251.83 510.57,252.56 510.98,253.61 511.51,254.56 511.99,255.22 512.17,255.77 511.83,256.45 511.74,257.01 511.83,257.78 511.86,258.92 511.65,259.95 511.27,260.87 511.00,261.90 510.99,262.59" fill="none" stroke="#1a6dcd" stroke-width="0.95" stroke-linejoin="round" stroke-linecap="round"/>
<polyline points="526.47,284.35 526.98,284.58 527.44,284.71 527.75,284.94 528.37,285.35 529.33,285.86 530.06,286.32 530.58,286.69 531.16,287.01 531.59,287.39 532.09,287.83 533.02,288.25 533.96,288.54 534.53,288.68 535.05,288.82 535.49,289.15 535.80,289.72 536.38,290.41 537.29,290.98 537.98,291.25 538.41,291.27 538.92,291.28 539.37,291.56 539.83,292.17 540.68,292.95 541.71,293.64 542.40,294.07 542.95,294.29 543.55,294.48 544.04,294.81 544.54,295.38 545.34,295.89 546.11,296.25 546.51,296.52 546.74,296.94 547.03,297.63 547.22,298.53 547.45,299.37 548.07,299.92 548.85,300.17 549.39,300.33 549.81,300.65 550.22,301.48 550.64,302.41 550.91,303.12 551.11,303.51 551.43,303.84 551.84,304.38 552.17,305.15 552.38,305.95 552.63,306.65 552.99,307.25 553.32,307.78 553.47,308.26 553.54,308.78 553.75,309.48" fill="none" stroke="#1a6dcd" stroke-width="0.95" stroke-linejoin="round" stroke-linecap="round"/>
<polyline points="445.59,189.15 445.06,189.40 444.49,189.37 444.02,189.11 443.50,188.88 442.62,188.90 441.53,189.14 440.69,189.37 440.06,189.42 439.36,189.34 438.67,189.33 438.05,189.48 437.26,189.81 436.32,189.89 435.55,189.66 435.11,189.38 434.75,189.39 434.21,189.75 433.54,190.21 432.81,190.47 431.88,190.49 430.74,190.52 429.75,190.82 429.15,191.34 428.80,191.88 428.44,192.07 427.94,192.05 427.34,192.11 426.61,192.39 425.71,192.74 424.66,193.01 423.70,193.14 423.06,193.18 422.74,193.24 422.49,193.43 422.04,193.82 421.34,194.33 420.48,194.65 419.57,194.76 418.57,194.85 417.59,195.17 416.91,195.72 416.58,196.22 416.29,196.41 415.75,196.30 415.00,196.20 414.22,196.37 413.38,196.75 412.44,197.02 411.56,196.96 411.10,196.49 410.67,196.32 409.79,196.43 408.83,196.54 408.02,196.36 407.17,195.83 406.58,195.20 406.18,194.81 405.35,194.83" fill="none" stroke="#1a6dcd" stroke-width="0.95" stroke-linejoin="round" stroke-linecap="round"/>
<polyline points="436.57,171.84 436.91,172.58 437.18,173.29 437.31,173.86 437.50,174.26 437.89,174.64 438.33,175.25 438.62,176.13 438.85,177.02 439.23,177.63 439.68,177.97 440.01,178.34 440.32,179.05 440.78,180.05 441.31,180.99 441.63,181.61 441.79,182.00 442.09,182.50 442.54,183.28 442.93,184.24 443.28,185.08 443.77,185.68 444.27,186.14" fill="none" stroke="#1a6dcd" stroke-width="0.95" stroke-linejoin="round" stroke-linecap="round"/>
<g fill="none" stroke="#0b0f18" stroke-width="1.2" stroke-linejoin="round" stroke-linecap="round">
<polygon points="435.32,119.29 436.18,119.40 436.78,118.83 437.50,117.83 438.38,117.16 439.11,117.30 439.66,117.90 440.38,118.17 441.36,117.72 442.51,118.03 442.77,118.02 443.09,117.94 443.68,118.18 444.20,118.94 445.19,119.97 446.46,120.80 446.84,121.25 446.62,121.19 446.57,121.24 446.64,121.84 446.71,122.85 447.33,123.69 448.50,124.00 449.33,124.05 449.53,124.14 449.96,124.78 450.60,125.77 451.20,126.62 452.33,126.93 453.57,126.69 453.91,126.29 453.93,126.25 454.40,126.85 454.91,127.87 455.60,128.80 456.83,129.19 457.75,128.95 457.86,128.43 458.10,128.17 458.82,129.01 459.54,130.29 460.08,131.33 460.66,131.92 461.20,132.35 462.06,132.54 462.21,132.90 462.64,133.26 463.38,133.48 464.07,133.55 465.14,133.59 466.36,133.70 466.77,133.88 466.88,134.03 467.34,133.88 468.04,133.51 468.65,133.31 469.50,133.56 470.52,134.14 470.99,134.57 471.04,134.88 471.64,134.72 472.69,134.64 473.67,135.08 474.96,135.92 475.99,136.76 476.06,137.25 476.22,137.49 476.82,137.81 477.24,138.67 477.66,139.84 478.31,140.69 478.46,140.87 478.09,140.68 478.57,140.25 479.63,140.37 480.71,141.00 481.88,141.64 483.25,141.84 484.18,141.55 484.38,141.16 484.71,141.04 485.78,141.21 486.80,141.67 487.80,142.19 488.87,142.53 489.15,142.61 489.08,142.55 489.18,142.73 489.15,143.09 489.00,143.92 488.91,144.83 489.17,145.80 489.84,147.02 490.62,148.02 491.35,147.71 491.33,147.68 491.81,148.22 492.94,149.17 493.93,150.00 495.06,150.25 496.04,149.90 496.14,149.40 496.12,149.47 496.56,150.04 497.04,151.13 497.29,152.30 497.68,153.12 498.16,153.50 498.21,153.76 498.03,154.32 498.54,154.87 499.65,155.07 500.62,155.00 501.77,154.94 502.67,155.11 502.79,155.48 503.28,155.84 504.58,156.08 505.58,156.48 506.50,156.76 507.36,156.94 507.43,157.20 507.45,157.68 508.37,158.36 509.37,158.98 510.11,159.27 510.95,159.20 511.24,159.06 511.18,159.22 511.93,159.84 513.15,160.71 514.06,161.42 514.95,161.64 515.72,161.35 515.84,160.92 516.10,160.85 517.21,161.38 518.35,162.36 519.08,163.26 519.86,163.64 520.21,163.33 520.11,162.75 520.75,162.55 521.99,163.11 522.82,164.21 523.54,165.25 524.18,165.68 524.27,165.44 524.70,165.25 525.96,165.44 527.21,166.13 528.00,167.05 528.76,167.78 529.24,168.15 529.19,168.35 529.42,168.74 530.36,169.46 531.14,170.29 530.55,171.51 530.20,172.34 530.35,172.43 530.78,172.70 530.96,173.26 530.65,173.62 530.05,174.43 529.63,175.79 529.63,176.73 529.85,177.38 529.85,178.37 529.40,179.05 528.79,179.52 528.56,180.64 528.91,181.82 529.49,182.63 529.75,183.69 529.45,184.55 528.93,184.62 528.69,184.78 529.29,185.29 530.20,185.92 530.95,186.81 530.92,188.01 530.29,189.05 529.80,189.43 529.89,189.47 530.52,190.05 531.22,191.18 532.27,192.45 533.37,193.29 533.83,193.45 533.89,193.27 534.30,193.33 534.96,193.94 535.38,194.90 534.50,196.26 533.87,196.98 533.77,197.61 533.90,198.20 533.73,198.12 533.03,198.22 533.55,198.52 534.44,199.31 534.96,200.47 534.74,201.54 534.72,202.05 535.30,201.92 535.95,201.51 536.82,201.38 538.08,201.84 538.87,202.74 538.98,203.64 539.40,204.25 540.29,204.59 541.10,204.96 542.06,205.57 543.21,206.33 543.50,207.24 543.06,207.61 542.43,207.83 542.18,208.23 542.36,208.83 542.78,209.58 543.45,210.51 544.45,211.43 545.39,211.97 545.85,211.89 545.58,212.02 545.48,212.79 545.78,213.99 546.12,215.02 546.78,215.48 547.94,215.65 548.80,216.16 548.89,217.21 549.00,218.39 549.52,219.22 549.99,219.49 550.52,219.42 551.43,219.46 552.49,219.57 552.62,220.20 553.02,221.06 553.92,221.71 554.80,221.89 556.13,221.73 557.32,221.65 557.49,221.96 557.72,222.66 558.51,223.43 559.25,223.90 560.26,224.01 561.34,223.97 561.49,224.07 561.47,224.44 562.18,224.96 563.02,225.43 564.00,225.71 565.25,225.86 564.49,226.02 563.92,226.67 563.93,227.34 564.23,227.89 564.22,229.17 563.65,230.44 562.90,231.19 562.21,231.98 561.91,232.34 561.67,232.07 561.07,232.34 560.03,233.32 558.92,234.11 558.24,234.87 558.12,235.61 558.16,235.65 557.85,235.63 557.05,236.50 556.15,237.47 555.64,238.14 555.74,238.99 555.86,239.37 555.44,239.32 554.55,240.07 553.84,240.98 553.99,242.03 554.37,243.42 554.41,244.29 553.85,244.54 553.07,245.26 553.29,245.88 554.20,246.72 555.09,247.46 555.64,247.90 556.19,248.09 556.74,248.31 556.90,248.79 556.87,249.56 557.28,250.46 556.91,251.44 556.89,252.50 557.29,253.03 557.80,253.56 557.98,254.51 557.65,255.27 557.04,255.87 556.62,256.95 556.64,258.01 556.92,258.49 557.05,259.00 556.75,259.65 556.15,259.85 555.63,260.04 555.63,260.97 555.96,261.90 556.10,262.83 555.67,264.29 554.89,265.43 554.31,265.88 554.27,266.44 554.61,266.83 555.10,266.89 555.45,267.39 555.50,268.60 555.41,269.73 555.52,270.34 556.02,270.86 556.75,271.39 557.24,271.65 557.30,272.18 556.70,273.34 556.25,274.74 556.41,275.67 556.91,275.91 557.50,276.03 558.40,276.73 559.44,278.06 559.98,279.35 559.83,279.99 559.20,280.23 558.51,280.73 558.24,280.95 558.46,281.02 558.77,281.83 558.71,282.93 558.18,283.82 557.59,285.10 557.39,286.44 557.63,287.04 557.92,287.45 557.79,287.98 558.13,288.20 558.71,288.61 559.46,289.25 559.62,289.87 559.28,290.18 559.38,290.18 559.95,290.22 560.59,290.69 561.54,291.67 562.87,292.83 563.39,293.19 563.47,293.90 562.98,294.55 562.32,294.80 562.04,295.59 562.20,296.69 562.36,297.46 562.04,298.63 561.27,299.89 560.58,300.42 560.69,301.01 561.07,301.48 561.52,302.00 562.24,302.71 563.19,303.67 563.75,304.76 563.58,305.61 563.22,305.93 563.26,306.01 563.43,306.62 563.88,307.89 564.20,309.06 564.11,309.73 563.69,310.41 563.37,310.97 563.53,310.99 564.17,311.12 564.88,311.96 563.52,311.61 562.72,311.91 562.44,312.46 561.97,312.67 561.51,312.21 561.01,311.19 559.75,310.26 558.32,309.88 557.70,310.23 557.29,310.87 556.60,311.12 555.98,310.69 555.01,309.86 553.43,309.26 552.35,309.24 552.06,309.63 551.54,310.12 550.86,310.23 550.29,310.16 549.36,310.29 548.15,310.62 547.60,310.79 547.67,310.44 547.40,309.73 546.75,309.24 546.03,309.44 544.97,309.65 543.65,309.90 543.09,309.69 542.98,308.88 542.39,307.78 541.60,306.89 540.82,306.47 539.62,306.40 538.58,306.33 538.45,306.02 538.43,305.80 537.83,305.41 537.18,304.91 536.31,304.52 535.11,304.44 534.60,304.65 534.65,304.85 534.11,304.71 533.19,304.18 532.29,303.54 531.03,303.25 530.07,303.77 529.65,304.68 529.34,305.41 528.48,305.48 527.24,304.95 526.15,304.38 525.15,304.30 524.14,304.67 523.58,305.00 523.70,304.86 523.80,304.35 523.24,304.06 522.23,304.41 521.38,305.21 520.39,305.79 519.44,305.62 519.09,304.86 518.76,304.16 517.63,304.08 516.24,304.55 515.24,305.09 514.34,305.30 514.20,305.66 514.23,305.73 514.01,306.07 513.37,307.14 512.57,308.08 512.04,308.38 511.98,308.66 512.20,308.94 512.22,308.92 511.72,308.63 510.35,308.68 509.12,308.50 508.36,307.79 507.64,306.83 507.27,306.20 507.37,306.12 506.61,306.12 505.21,305.75 504.23,305.21 503.71,304.81 503.18,304.68 502.99,304.71 502.89,304.70 502.85,305.26 502.55,305.30 501.66,305.63 500.40,306.85 499.30,307.97 498.74,308.62 498.59,309.27 498.26,308.86 498.01,308.58 497.45,308.82 496.78,309.45 496.09,310.01 495.02,310.16 493.56,310.04 492.51,310.14 492.23,310.79 492.30,311.81 492.04,312.26 491.22,311.91 490.16,311.82 489.19,312.71 488.23,313.38 487.06,313.42 486.22,312.82 486.06,312.30 486.06,312.56 485.55,313.46 484.59,314.22 483.52,314.26 482.26,313.86 481.06,313.44 480.36,312.84 480.48,312.24 480.32,311.95 479.69,312.05 479.13,312.24 478.28,312.09 477.31,311.35 476.60,310.78 476.24,310.62 475.53,311.05 474.53,311.57 473.73,311.66 473.03,311.42 472.18,311.46 471.56,312.14 471.43,313.08 471.13,313.61 470.12,313.11 468.87,312.23 467.76,311.56 466.50,311.44 465.86,311.73 465.76,311.95 464.93,311.74 463.64,311.12 462.78,310.36 461.85,309.80 461.31,309.67 461.45,309.84 460.98,309.96 459.79,309.67 458.88,308.96 457.72,308.48 456.75,308.53 456.52,308.79 456.19,308.85 455.02,308.74 454.65,309.08 454.20,309.50 453.41,310.50 452.37,311.56 451.45,311.68 450.94,311.40 450.82,311.71 451.10,312.30 450.93,312.89 450.32,314.17 449.72,315.56 449.57,316.41 448.95,315.60 448.69,314.59 448.03,314.14 446.43,314.56 445.37,315.34 444.81,314.99 444.22,314.22 444.00,313.37 443.97,312.79 443.34,312.44 442.49,311.93 442.27,310.97 441.32,311.84 440.75,312.61 440.74,313.52 440.86,314.80 440.53,315.29 439.69,315.27 438.91,315.51 438.51,315.65 438.50,315.89 438.55,316.80 438.24,317.80 437.50,318.08 436.64,318.21 436.08,318.59 435.96,318.87 435.94,319.32 435.65,320.51 434.84,321.67 433.68,322.06 432.56,322.20 431.85,322.63 431.58,323.08 431.47,323.65 431.17,324.71 430.58,325.70 429.83,326.32 429.38,326.79 429.41,327.49 429.67,327.78 429.67,327.87 429.21,328.50 428.52,329.22 428.08,329.67 428.13,330.54 428.13,331.38 428.22,331.45 428.00,331.26 427.33,331.74 426.38,332.78 425.49,333.61 424.89,334.12 423.86,333.99 422.98,333.81 422.07,333.24 421.75,332.30 421.98,331.35 421.72,330.84 420.93,330.87 420.35,331.11 419.85,331.05 418.79,330.98 418.38,330.19 418.24,329.25 417.28,328.82 415.95,329.11 414.98,329.71 414.02,329.95 413.31,329.53 413.26,328.72 412.86,328.10 411.56,327.41 410.43,327.30 409.68,327.66 408.96,327.93 408.81,327.58 409.01,326.55 408.48,325.31 407.52,324.44 406.99,324.14 406.54,324.13 406.16,323.97 406.19,323.72 405.86,323.25 404.62,322.78 403.50,322.45 402.74,322.24 401.96,321.99 401.68,321.62 401.57,321.22 400.56,320.97 399.25,320.99 398.48,320.90 397.81,320.65 397.30,320.31 397.25,320.00 396.77,319.76 395.45,319.57 394.36,319.33 393.74,319.05 393.06,318.78 393.35,318.41 393.55,317.80 393.14,317.59 392.18,318.13 390.92,319.19 389.78,319.78 389.07,319.69 388.76,319.66 388.33,319.20 387.86,319.31 387.33,319.81 386.95,320.22 386.12,320.22 384.55,319.99 383.13,319.95 382.41,320.30 381.82,320.78 381.17,320.88 380.75,320.39 380.56,320.37 380.56,320.49 380.25,321.50 379.35,322.50 378.11,323.17 377.09,323.90 376.58,324.21 376.34,324.09 376.08,324.61 375.54,325.81 374.81,326.76 374.17,327.31 373.88,327.84 373.92,328.13 373.27,327.07 372.60,325.94 371.82,325.35 370.63,325.43 370.12,325.69 370.63,325.27 371.06,324.46 371.06,323.30 370.77,322.33 370.20,322.00 369.14,322.00 367.87,321.53 367.17,320.30 367.32,318.93 367.73,318.18 367.88,318.00 367.22,317.83 366.50,317.37 365.18,316.79 364.26,316.37 364.25,316.25 363.95,316.34 363.25,316.34 362.51,316.00 361.19,315.33 360.42,314.42 360.32,313.49 360.31,312.96 359.75,312.91 358.99,313.04 358.21,312.89 357.01,312.27 355.83,311.39 355.47,310.61 355.55,310.12 355.99,309.76 356.77,309.54 357.41,309.24 357.57,308.18 357.38,307.02 357.32,306.19 357.79,305.31 358.59,304.58 359.28,304.41 359.53,303.98 359.39,302.84 359.31,301.81 359.68,301.00 360.47,300.06 361.30,299.63 361.76,299.84 361.84,299.68 361.92,299.03 362.06,298.66 362.69,298.03 363.33,296.96 363.48,296.35 363.18,295.67 362.99,294.62 363.33,294.05 364.05,293.46 364.58,292.39 364.56,291.69 364.24,291.04 364.09,290.12 364.38,289.41 364.93,288.87 365.31,287.80 365.26,286.67 364.94,286.07 364.80,285.47 365.16,284.79 365.92,284.66 366.66,284.68 366.97,284.16 366.67,283.34 366.00,282.55 365.43,281.51 365.30,280.35 365.52,279.77 365.65,279.70 365.34,279.24 364.64,278.22 364.18,277.15 364.20,275.98 364.76,274.48 365.41,273.63 365.68,273.33 365.53,272.78 365.39,272.45 365.67,272.28 366.30,271.36 366.83,270.20 366.61,269.29 366.02,268.40 365.48,267.61 365.30,267.35 365.41,267.05 365.54,265.94 365.43,264.58 365.12,263.63 364.82,262.79 364.76,262.01 364.97,261.71 365.27,261.40 365.40,260.29 365.17,258.92 364.64,258.03 364.02,257.35 363.56,256.68 363.42,256.42 363.55,256.15 363.77,255.11 363.82,254.22 363.56,253.84 362.85,254.02 362.09,254.30 360.76,254.04 359.79,253.04 359.71,251.77 359.28,250.76 358.37,250.49 357.56,250.53 356.73,250.17 355.78,249.22 355.30,248.22 355.71,247.71 355.93,247.80 355.64,247.88 355.27,247.28 354.43,245.98 353.17,244.66 353.55,244.75 354.21,244.32 355.18,243.24 356.27,242.42 357.18,242.37 357.71,242.44 357.90,242.05 357.97,241.42 357.91,240.60 358.38,239.51 359.07,238.61 359.43,238.27 359.26,237.57 358.91,236.65 358.91,236.15 359.32,235.41 359.81,234.40 359.92,233.93 359.50,233.60 358.92,232.87 358.68,232.36 359.96,231.69 361.32,230.82 362.14,230.60 362.27,230.87 362.17,230.26 362.44,229.08 363.17,228.30 364.12,227.74 364.86,227.37 365.19,227.33 365.32,226.98 365.74,225.84 366.76,224.84 368.19,224.81 369.37,224.99 369.99,224.65 370.06,224.15 369.97,223.51 370.17,222.56 370.79,222.04 371.58,222.26 372.17,222.12 372.72,221.30 373.19,220.27 373.69,219.63 374.48,219.38 375.66,219.18 376.95,218.88 377.84,218.38 378.11,217.64 377.97,216.80 377.95,216.60 378.53,217.00 379.73,216.80 381.13,215.72 382.24,214.87 382.85,214.75 383.16,214.68 383.52,214.36 384.07,213.86 384.77,212.99 385.45,212.01 386.03,211.74 386.55,212.08 387.14,211.85 387.90,210.82 388.77,209.88 389.89,209.53 390.76,209.19 391.07,209.13 391.03,208.89 391.20,207.70 391.90,207.07 392.56,207.31 393.48,208.08 394.99,208.35 396.47,207.69 397.13,206.77 397.18,206.42 397.29,206.70 397.69,206.64 398.30,205.80 399.19,204.80 400.50,204.37 400.19,204.25 399.92,203.50 399.32,202.33 398.74,201.34 398.69,200.62 399.29,199.89 400.04,199.82 400.51,200.10 400.54,199.71 400.42,198.94 400.58,198.31 401.15,197.39 401.95,196.45 402.31,196.19 402.11,195.52 401.92,194.63 402.55,194.36 403.58,193.43 404.63,192.24 405.35,191.81 405.70,192.01 405.95,191.90 406.49,191.41 407.55,190.98 408.64,190.42 409.38,189.90 409.63,189.88 409.63,190.19 409.78,189.94 410.35,188.84 411.54,187.88 412.85,187.84 414.16,188.06 415.31,187.53 415.38,186.60 415.18,185.88 415.29,184.78 415.94,183.95 416.76,183.81 417.19,183.32 416.77,182.15 416.18,181.58 415.87,181.29 416.01,180.80 416.38,180.39 416.54,180.00 416.20,178.99 417.37,179.13 417.97,178.84 418.58,178.53 418.92,178.62 419.09,179.20 420.17,179.96 421.63,180.43 422.41,180.40 423.05,180.04 423.11,179.39 423.40,179.61 424.15,179.11 425.09,178.07 425.60,177.42 425.68,176.60 425.76,176.17 426.34,176.39 427.43,176.05 428.55,175.08 429.17,174.25 429.87,173.74 430.07,173.41 430.20,173.47 430.69,173.59 431.58,173.14 432.55,172.06 433.36,171.09 434.09,170.93 434.89,171.20 435.66,170.93 436.26,169.85 436.75,168.93 437.35,168.81 438.17,169.02 439.01,168.89 439.55,168.41 439.88,167.83 440.87,168.18 442.06,168.98 442.45,169.82 442.35,170.32 442.83,170.38 443.61,170.22 444.38,170.17 444.13,169.23 444.30,168.05 444.99,167.49 445.73,167.40 446.02,166.92 445.83,166.52 445.66,166.21 445.97,165.10 446.68,163.82 447.29,162.87 447.38,161.61 446.54,160.75 445.88,160.63 445.88,160.40 446.46,159.44 447.03,158.30 447.04,157.39 446.44,156.49 445.65,155.78 445.10,155.64 444.91,155.40 445.57,154.67 446.18,154.01 446.37,153.66 446.16,152.84 445.95,151.71 446.16,150.96 446.79,150.11 447.45,148.97 447.70,148.35 446.85,148.38 446.49,147.82 446.41,146.65 446.17,145.52 445.90,145.04 445.83,145.07 445.63,144.97 444.91,144.28 444.05,143.21 443.59,142.29 443.37,141.79 442.90,141.54 442.41,141.14 442.23,140.36 441.95,139.29 441.36,138.26 441.07,137.48 441.26,136.95 441.22,136.45 440.65,135.73 440.04,134.77 439.54,133.58 438.98,132.64 438.36,132.36 438.07,132.28 438.16,131.57 438.14,130.18 437.65,128.96 437.09,128.55 436.80,128.51 436.43,128.06 435.86,127.08 435.64,126.05 435.87,125.35 435.91,124.78 435.48,124.32 434.94,124.04 434.70,123.47 434.72,122.26 434.61,120.96 434.16,120.37 434.88,119.83 435.07,119.24"/>
<polygon points="426.62,107.71 426.77,108.01 426.59,108.27 425.92,109.24 425.12,110.15 424.66,110.50 424.69,110.94 424.86,111.22 424.67,111.02 424.05,111.45 423.33,112.57 423.09,113.52 423.37,114.88 423.65,116.48 423.43,117.30 422.49,117.55 421.56,117.69 420.70,117.85 419.89,118.17 419.14,118.87 418.54,119.62 418.08,119.74 417.59,119.23 416.97,118.75 416.02,119.03 415.09,119.71 414.39,120.04 413.65,119.73 412.78,119.33 412.17,119.60 412.01,120.61 411.52,121.56 410.73,122.01 410.15,122.65 410.07,123.47 410.31,123.84 410.37,124.39 409.95,125.50 409.22,126.41 408.68,127.22 408.64,128.43 409.30,128.90 410.17,128.92 410.70,129.33 410.78,130.51 410.77,131.77 411.00,132.51 411.37,132.92 411.36,133.92 411.29,134.17 410.70,133.94 409.65,134.24 408.66,134.65 408.16,135.21 408.07,136.48 407.85,137.51 407.76,138.18 407.39,139.37 407.17,140.58 407.36,141.06 407.80,141.47 408.00,142.01 407.65,142.16 406.94,142.58 406.38,143.80 406.39,144.99 407.08,145.63 407.77,146.06 408.77,146.28 410.27,146.60 411.12,147.30 411.22,148.27 411.58,149.06 412.10,149.29 412.60,149.06 412.95,149.32 413.27,149.71 413.31,150.73 413.15,152.12 413.18,153.01 413.65,153.16 414.26,153.28 414.57,153.96 414.62,155.01 414.81,155.97 414.48,156.92 414.63,158.15 415.14,158.83 415.53,159.13 415.41,159.79 414.85,160.26 414.33,160.47 413.99,160.86 414.02,161.48 413.94,161.98 413.37,163.08 412.41,164.60 411.52,165.50 411.10,166.13 411.06,166.84 412.16,167.35 412.63,167.44 412.96,167.55 413.29,167.99 413.29,168.69 413.44,169.30 414.31,169.56 415.30,169.56 415.24,170.04 415.37,170.61 415.85,171.87 416.41,173.39 416.51,174.24 416.07,174.68 415.35,175.33 414.86,176.00 414.94,176.55 415.53,177.55 416.20,178.99 417.37,179.13 417.97,178.84 418.58,178.53 418.92,178.62 419.09,179.20 420.17,179.96 421.63,180.43 422.41,180.40 423.05,180.04 423.11,179.39 423.40,179.61 424.15,179.11 425.09,178.07 425.60,177.42 425.68,176.60 425.76,176.17 426.34,176.39 427.43,176.05 428.55,175.08 429.17,174.25 429.87,173.74 430.07,173.41 430.20,173.47 430.69,173.59 431.58,173.14 432.55,172.06 433.36,171.09 434.09,170.93 434.89,171.20 435.66,170.93 436.26,169.85 436.75,168.93 437.35,168.81 438.17,169.02 439.01,168.89 439.55,168.41 439.88,167.83 440.87,168.18 442.06,168.98 442.45,169.82 442.35,170.32 442.83,170.38 443.61,170.22 444.38,170.17 444.13,169.23 444.30,168.05 444.99,167.49 445.73,167.40 446.02,166.92 445.83,166.52 445.66,166.21 445.97,165.10 446.68,163.82 447.29,162.87 447.38,161.61 446.54,160.75 445.88,160.63 445.88,160.40 446.46,159.44 447.03,158.30 447.04,157.39 446.44,156.49 445.65,155.78 445.10,155.64 444.91,155.40 445.57,154.67 446.18,154.01 446.37,153.66 446.16,152.84 445.95,151.71 446.16,150.96 446.79,150.11 447.45,148.97 447.70,148.35 446.85,148.38 446.49,147.82 446.41,146.65 446.17,145.52 445.90,145.04 445.83,145.07 445.63,144.97 444.91,144.28 444.05,143.21 443.59,142.29 443.37,141.79 442.90,141.54 442.41,141.14 442.23,140.36 441.95,139.29 441.36,138.26 441.07,137.48 441.26,136.95 441.22,136.45 440.65,135.73 440.04,134.77 439.54,133.58 438.98,132.64 438.36,132.36 438.07,132.28 438.16,131.57 438.14,130.18 437.65,128.96 437.09,128.55 436.80,128.51 436.43,128.06 435.86,127.08 435.64,126.05 435.87,125.35 435.93,124.74 435.52,124.23 435.01,123.97 434.81,123.44 434.97,122.22 435.11,120.88 434.83,120.22 435.26,119.79 435.24,119.25 435.32,119.29 434.07,119.13 433.33,118.49 433.32,117.28 432.92,116.39 432.66,116.26 432.31,116.70 430.97,116.94 429.95,116.36 430.37,115.20 430.52,114.32 430.19,113.65 429.68,113.04 429.38,112.68 429.38,112.48 429.08,111.66 428.36,110.18 427.82,108.91 427.60,108.47 427.18,108.39"/>
<polygon points="442.09,209.49 442.59,209.13 443.04,208.35 443.72,207.71 444.57,207.44 445.75,207.68 446.47,207.88 447.18,208.35 447.56,209.15 447.56,209.96 448.22,210.33 449.47,210.13 450.14,209.84 450.53,210.11 450.87,211.14 451.02,212.17 451.60,212.91 453.06,212.89 454.24,212.27 454.90,211.71 455.61,211.81 455.92,212.73 456.15,213.94 457.13,214.90 458.44,215.24 459.13,215.03 459.50,214.69 459.90,214.73 459.96,215.34 460.12,216.33 461.30,217.13 462.58,217.52 463.17,217.31 463.62,216.69 464.12,216.20 464.39,216.27 465.03,216.96 466.44,217.85 467.62,218.38 468.12,218.24 468.65,217.71 469.16,217.32 469.59,217.63 470.85,218.61 472.21,219.72 472.80,220.02 473.16,219.56 473.54,218.80 473.80,218.61 474.43,218.87 475.63,219.00 476.77,218.74 477.51,218.35 478.14,218.22 478.87,218.40 479.43,218.62 479.94,218.89 481.00,218.43 482.25,217.69 482.65,217.33 482.71,217.68 483.27,218.47 483.95,219.12 484.88,219.94 486.34,220.19 487.43,220.20 487.51,220.53 487.36,221.36 487.45,222.29 486.77,223.27 486.49,224.59 486.68,225.42 486.88,225.78 486.60,226.54 485.91,227.16 485.33,227.54 485.31,228.52 485.76,229.50 486.11,230.04 486.08,230.90 485.73,231.68 485.52,231.94 485.77,232.61 486.25,233.71 486.46,234.49 486.10,235.49 485.44,236.71 485.03,237.23 485.15,237.44 485.74,237.95 486.08,238.46 485.95,239.12 485.81,240.24 486.04,241.58 486.48,242.40 486.83,242.51 487.20,242.75 487.74,243.80 487.36,243.67 486.75,243.61 485.65,244.07 484.09,244.99 482.71,245.77 482.11,245.92 482.12,245.70 482.12,245.88 481.80,246.72 481.24,247.57 480.43,247.65 479.18,247.03 477.68,246.64 476.66,247.26 476.29,248.22 476.44,248.67 476.64,248.54 476.43,248.45 475.66,248.76 474.55,249.31 473.44,249.93 472.56,250.55 471.93,250.91 472.25,251.59 472.43,252.03 472.14,252.93 471.47,253.80 470.86,254.19 470.71,254.83 470.95,255.70 471.17,256.12 470.99,256.60 470.42,257.54 470.38,258.57 470.64,259.44 471.05,260.46 471.30,261.12 471.20,261.12 470.86,261.41 470.56,262.45 470.60,263.50 471.01,264.37 471.45,265.32 471.62,265.99 471.28,266.22 470.74,267.01 470.57,268.07 470.95,268.95 471.51,270.38 471.65,271.84 471.19,272.52 470.36,272.94 469.90,273.34 469.92,273.22 470.03,273.34 469.77,274.13 469.04,274.78 468.22,275.40 467.78,276.44 467.04,276.70 466.38,276.35 465.72,276.62 464.98,277.74 464.16,278.72 463.41,279.13 462.95,279.37 462.80,279.61 462.56,279.93 461.95,280.65 460.66,281.21 459.48,281.20 458.94,280.78 458.41,280.47 457.55,280.53 456.76,280.65 455.95,280.47 454.66,279.94 453.61,279.71 453.47,279.99 453.25,280.57 452.55,280.94 451.85,280.68 450.81,279.92 449.89,278.82 449.24,278.26 449.20,278.24 449.70,277.93 450.31,277.09 450.56,276.20 450.34,275.35 449.89,274.25 449.66,273.31 449.85,273.04 450.41,272.84 450.83,272.07 450.74,271.07 450.15,270.21 449.43,269.06 449.06,267.77 449.20,267.14 449.64,266.97 449.95,266.52 449.88,265.99 449.53,265.63 449.25,264.86 449.40,263.73 449.91,263.03 450.38,262.65 450.47,261.98 450.23,261.45 450.04,261.19 450.24,260.33 450.82,258.97 451.36,257.87 451.44,256.71 451.01,255.35 450.46,254.63 449.98,254.49 450.06,254.09 450.49,253.43 450.80,252.85 450.64,251.99 450.12,250.79 449.68,250.05 449.71,250.00 450.22,249.81 450.78,249.25 450.88,248.71 450.34,247.96 449.48,246.78 448.80,245.77 448.65,245.45 448.96,245.26 449.36,244.66 449.44,243.93 449.12,243.19 448.68,242.03 448.55,240.64 448.94,239.81 449.65,239.52 450.16,239.09 450.04,238.30 449.31,237.49 448.40,236.52 447.76,235.21 447.57,234.16 447.63,233.84 447.68,233.69 447.56,232.99 447.36,231.95 447.21,231.02 447.18,230.06 446.50,229.77 445.35,230.24 444.52,230.73 444.32,229.81 444.39,228.74 444.75,227.82 445.18,226.99 445.23,226.30 444.69,225.98 443.82,225.79 443.16,225.08 442.96,223.75 442.95,222.55 442.77,222.04 442.37,221.85 442.00,221.42 441.83,220.75 441.83,220.00 441.84,219.06 442.04,217.82 442.29,216.95 442.36,216.78 442.06,216.49 441.44,215.57 440.81,214.55 440.82,213.58 441.21,212.29 441.55,211.33 441.49,211.16 441.16,210.87 441.02,210.40 441.39,210.19"/>
<polygon points="446.02,287.87 445.78,287.08 445.74,286.52 446.26,285.43 447.05,284.43 447.51,284.03 447.41,283.31 447.15,282.57 447.27,282.50 447.98,281.51 449.10,280.21 450.14,279.86 450.81,279.92 451.85,280.68 452.55,280.94 453.25,280.57 453.47,279.99 453.61,279.71 454.66,279.94 455.95,280.47 456.76,280.65 457.55,280.53 458.41,280.47 458.94,280.78 459.48,281.20 460.66,281.21 461.95,280.65 462.56,279.93 462.80,279.61 462.95,279.37 463.41,279.13 464.16,278.72 464.98,277.74 465.72,276.62 466.38,276.35 467.04,276.70 467.78,276.44 468.22,275.40 469.04,274.78 469.77,274.13 470.03,273.34 469.92,273.22 469.90,273.34 470.36,272.94 471.19,272.52 471.65,271.84 471.51,270.38 470.95,268.95 470.57,268.07 470.74,267.01 471.28,266.22 471.62,265.99 471.45,265.32 471.01,264.37 470.60,263.50 470.56,262.45 470.86,261.41 471.20,261.12 471.30,261.12 471.05,260.46 470.64,259.44 470.38,258.57 470.42,257.54 470.99,256.60 471.17,256.12 470.95,255.70 470.71,254.83 470.86,254.19 471.47,253.80 472.14,252.93 472.43,252.03 472.25,251.59 471.93,250.91 472.56,250.55 473.44,249.93 474.55,249.31 475.66,248.76 476.43,248.45 476.64,248.54 476.44,248.67 476.29,248.22 476.66,247.26 477.68,246.64 479.16,247.05 480.39,247.69 481.23,247.70 481.86,246.90 482.21,245.98 482.16,245.68 482.09,245.94 482.68,246.03 484.01,245.43 485.45,244.48 486.51,243.95 487.30,244.16 487.92,244.63 488.16,245.79 488.06,246.48 488.31,246.63 489.15,246.65 489.91,247.02 490.22,247.84 490.56,248.75 491.01,249.29 491.26,249.39 491.49,249.40 492.19,249.83 493.13,250.78 493.60,251.86 493.53,252.64 493.46,253.07 493.49,253.43 493.41,254.05 493.64,255.07 494.78,256.24 496.20,257.15 497.08,257.66 497.60,258.00 497.97,258.51 497.80,259.29 497.13,260.31 496.90,261.41 497.45,262.26 498.42,262.49 499.13,262.73 499.28,263.80 499.08,265.22 498.85,266.16 498.32,266.64 498.32,267.19 498.50,267.21 498.34,267.27 497.66,268.06 496.85,268.75 496.44,269.31 496.53,270.26 496.70,270.82 497.50,271.67 497.60,272.43 497.68,272.75 498.49,272.58 499.41,272.32 499.99,272.48 500.59,273.30 500.95,274.52 500.66,275.62 500.88,276.16 502.01,276.08 503.09,275.62 503.95,275.37 504.86,275.73 505.16,276.63 505.34,277.53 506.48,277.88 507.86,277.54 508.82,276.93 509.79,276.69 510.11,277.52 509.96,278.66 510.54,279.55 511.64,279.94 512.29,280.04 512.81,280.25 513.21,280.69 513.03,281.14 513.18,281.47 514.26,281.51 515.39,281.72 516.21,282.52 517.08,283.80 517.61,284.98 517.58,285.59 517.82,285.73 518.62,285.93 519.31,286.55 519.61,287.55 519.95,288.44 520.26,288.79 520.16,288.61 520.18,288.40 520.98,288.70 522.12,289.66 522.91,290.87 522.62,291.71 521.77,292.67 520.92,294.11 520.63,294.85 520.78,295.14 520.75,295.59 520.12,295.52 519.14,295.65 518.36,296.56 518.02,297.44 517.95,297.96 517.73,298.56 517.09,298.95 516.16,298.87 515.36,299.24 515.03,300.38 515.39,301.75 515.65,303.04 515.30,304.50 514.64,305.01 514.34,305.30 514.20,305.66 514.23,305.73 514.01,306.07 513.37,307.14 512.57,308.08 512.04,308.38 511.98,308.66 512.20,308.94 512.22,308.92 511.72,308.63 510.35,308.68 509.12,308.50 508.36,307.79 507.64,306.83 507.27,306.20 507.37,306.12 506.61,306.12 505.21,305.75 504.23,305.21 503.71,304.81 503.18,304.68 502.99,304.71 502.89,304.70 502.85,305.26 502.55,305.30 501.66,305.63 500.40,306.85 499.30,307.97 498.74,308.62 498.59,309.27 498.26,308.86 498.01,308.58 497.45,308.82 496.78,309.45 496.09,310.01 495.02,310.16 493.56,310.04 492.51,310.14 492.23,310.79 492.30,311.81 492.04,312.26 491.22,311.91 490.16,311.82 489.19,312.71 488.23,313.38 487.06,313.42 486.22,312.82 486.06,312.30 486.06,312.56 485.55,313.46 484.59,314.22 483.52,314.26 482.26,313.86 481.06,313.44 480.36,312.84 480.48,312.24 480.32,311.95 479.69,312.05 479.13,312.24 478.28,312.09 477.31,311.35 476.60,310.78 476.24,310.62 475.53,311.05 474.53,311.57 473.73,311.66 473.03,311.42 472.18,311.46 471.56,312.14 471.43,313.08 471.13,313.61 470.12,313.11 468.87,312.23 467.76,311.56 466.50,311.44 465.86,311.73 465.76,311.95 464.93,311.74 463.64,311.12 462.78,310.36 461.85,309.80 461.31,309.67 461.45,309.84 460.98,309.96 459.79,309.67 458.88,308.96 458.42,307.99 457.95,307.03 457.99,306.50 458.12,306.47 457.50,306.59 456.37,306.45 455.45,305.87 454.59,305.08 453.76,304.32 453.34,303.72 453.60,303.33 454.12,303.00 454.32,302.32 454.08,301.11 453.65,299.85 453.12,299.20 452.37,299.14 451.42,298.87 451.08,297.91 451.29,296.44 451.12,295.22 450.49,294.76 449.98,294.78 449.49,294.56 448.72,293.69 448.22,292.44 448.14,291.62 448.03,291.46 447.54,291.47 447.03,291.10 446.86,290.24 446.74,289.27 446.37,288.57 446.05,288.17"/>
<polygon points="407.65,283.65 408.85,283.47 410.21,282.71 411.22,281.84 411.59,281.41 411.62,281.43 411.86,281.55 412.50,281.47 413.36,281.15 414.27,280.73 415.30,280.39 416.42,280.37 417.36,280.63 417.81,280.75 417.88,280.30 418.03,279.42 418.64,278.82 419.62,278.92 420.63,279.26 421.46,279.03 422.21,278.06 422.97,277.09 423.62,276.83 423.99,277.13 424.26,277.18 424.71,276.61 425.50,275.82 426.44,275.28 427.21,275.07 427.67,275.01 428.05,274.93 428.65,274.68 429.53,274.08 430.44,273.29 431.28,272.42 431.79,272.35 431.82,272.34 431.60,271.61 431.59,270.67 432.11,270.00 433.10,269.29 434.14,268.84 434.85,269.04 435.17,269.10 435.23,268.29 435.68,267.47 436.57,266.91 437.50,266.12 438.00,265.68 438.03,265.83 438.00,265.51 438.53,265.91 439.16,266.02 439.49,266.45 439.25,267.54 438.87,268.85 438.92,269.66 439.36,269.78 439.83,269.77 440.30,270.26 441.00,271.28 441.77,272.33 442.11,272.96 442.01,273.19 442.03,273.39 442.44,273.82 442.92,274.50 443.16,275.47 443.61,276.53 444.33,277.40 444.82,277.66 444.61,277.76 443.98,278.59 443.66,280.04 444.66,280.79 445.50,281.29 446.24,281.55 447.01,281.88 446.97,281.93 447.25,282.53 447.39,283.30 447.07,283.87 446.39,284.91 445.83,286.30 445.72,286.97 445.95,287.53 445.99,288.27 445.98,288.52 446.33,289.11 446.60,290.12 446.77,291.13 447.30,291.60 447.96,291.54 448.16,291.63 448.21,292.42 448.72,293.69 449.49,294.56 449.98,294.78 450.49,294.76 451.12,295.22 451.29,296.44 451.08,297.91 451.42,298.87 452.37,299.14 453.19,299.22 453.86,299.82 454.57,301.04 454.92,302.29 454.54,302.95 453.94,302.97 453.92,302.95 454.47,303.47 454.80,304.78 455.26,305.74 455.44,306.75 455.19,307.85 454.77,308.29 454.64,308.32 455.02,308.74 454.65,309.08 454.20,309.50 453.41,310.50 452.37,311.56 451.45,311.68 450.94,311.40 450.82,311.71 451.10,312.30 450.93,312.89 450.32,314.17 449.72,315.56 449.57,316.41 448.95,315.60 448.69,314.59 448.03,314.14 446.43,314.56 445.37,315.34 444.81,314.99 444.22,314.22 444.00,313.37 443.97,312.79 443.34,312.44 442.49,311.93 442.27,310.97 442.25,309.85 442.05,308.96 441.97,308.64 441.82,308.81 440.89,309.01 439.50,308.77 438.57,308.00 437.99,307.17 437.32,306.48 436.95,306.11 436.45,305.85 435.11,305.38 433.98,304.69 433.65,304.10 433.34,303.97 432.99,304.38 432.75,304.54 431.68,304.14 430.31,303.34 429.71,302.56 429.33,302.20 428.80,302.27 428.46,302.48 427.56,302.42 425.97,301.92 425.04,301.10 424.67,300.34 424.09,300.01 423.67,300.15 422.95,300.40 421.49,300.30 420.60,299.67 420.48,298.64 420.18,297.74 419.89,297.47 419.50,297.83 418.31,298.28 417.24,298.19 417.04,297.33 416.78,296.09 416.31,295.15 416.55,294.49 416.48,294.28 415.79,294.09 414.68,293.29 413.76,291.96 413.42,290.81 413.59,290.30 413.93,290.09 414.25,289.67 414.33,289.05 414.29,288.16 413.55,287.29 412.33,286.77 411.48,286.63 411.12,286.60 410.73,286.31 410.28,285.72 410.06,284.87 409.48,284.17 408.36,283.85"/>
<polygon points="397.46,241.85 396.47,242.43 395.85,242.88 395.54,242.77 395.20,242.77 394.50,243.72 393.46,244.92 392.42,245.50 391.75,245.83 391.54,246.18 391.50,246.35 391.27,246.85 390.69,248.03 389.88,248.99 389.41,249.34 389.45,249.88 389.63,250.46 389.45,250.70 388.77,251.49 387.99,252.77 387.60,253.64 387.71,254.49 387.88,255.38 387.63,255.53 386.92,255.49 386.35,256.01 386.13,256.48 386.37,257.00 386.77,258.21 386.89,259.64 386.57,260.55 386.03,261.38 385.68,262.33 385.72,262.80 386.00,263.12 386.13,264.05 385.90,265.10 385.68,265.93 385.69,266.83 386.05,267.68 386.59,267.85 386.98,267.78 386.98,268.33 386.62,269.23 386.21,269.97 386.05,270.86 386.22,271.83 386.52,272.18 386.68,272.20 386.61,272.82 386.46,273.86 386.22,274.77 386.41,275.99 386.97,277.48 387.47,278.36 387.49,278.83 387.02,279.56 386.45,280.12 386.23,280.42 386.47,281.23 386.85,282.34 386.92,283.00 386.51,283.61 385.96,284.43 385.55,284.75 385.50,284.83 385.67,285.58 385.73,286.68 385.52,287.62 385.18,288.78 385.09,290.05 385.44,290.62 386.44,290.06 387.42,289.64 388.41,289.85 388.69,290.73 388.72,291.78 389.55,292.40 390.70,292.29 391.54,291.72 392.44,291.24 393.09,291.32 393.09,291.95 393.44,292.90 394.71,293.43 395.77,293.28 396.69,292.74 397.54,292.43 397.70,292.77 398.20,293.63 399.27,293.15 400.14,292.55 400.59,291.40 400.83,290.38 401.22,290.24 401.98,290.33 402.94,289.98 403.74,289.51 404.10,288.95 404.12,287.96 404.15,287.16 404.63,287.23 405.49,287.17 406.27,286.53 406.57,285.89 406.44,285.01 406.36,283.87 406.77,283.50 407.65,283.65 407.93,283.08 408.03,282.02 407.75,280.95 407.35,280.10 407.13,279.40 407.01,278.87 406.75,278.57 406.40,278.16 406.22,277.18 406.19,275.83 405.97,274.84 405.43,274.61 404.89,274.54 404.75,273.93 404.86,272.82 404.74,271.76 404.24,270.99 403.64,270.40 403.17,269.94 402.73,269.63 402.24,269.08 402.00,268.06 402.26,266.86 402.62,266.09 402.46,265.97 401.87,266.01 401.31,265.50 400.86,264.35 400.25,263.15 399.62,262.61 399.42,262.56 399.65,262.34 399.70,261.65 399.25,260.73 398.59,259.87 398.05,259.16 397.52,258.64 397.22,257.89 397.33,257.46 397.92,256.44 398.55,255.23 398.75,254.45 398.55,253.43 398.43,252.46 398.83,252.22 399.59,251.94 400.18,251.36 400.15,250.88 399.49,250.18 398.66,248.82 398.20,247.54 398.26,246.96 398.33,246.63 398.14,246.09 397.61,245.46 397.14,244.67 397.04,243.43 397.24,242.25"/>
<polygon points="366.83,270.20 366.30,271.36 365.67,272.28 365.39,272.45 365.53,272.78 365.68,273.33 365.41,273.63 364.76,274.48 364.20,275.98 364.18,277.15 364.64,278.22 365.34,279.24 365.65,279.70 365.52,279.77 365.30,280.35 365.43,281.51 366.00,282.55 366.67,283.34 366.97,284.16 366.66,284.68 365.92,284.66 365.16,284.79 364.80,285.47 364.94,286.07 365.26,286.67 365.31,287.80 364.93,288.87 364.38,289.41 364.09,290.12 364.24,291.04 364.56,291.69 364.58,292.39 364.05,293.46 363.33,294.05 362.99,294.62 363.18,295.67 363.48,296.35 363.33,296.96 362.69,298.03 362.06,298.66 361.92,299.03 361.84,299.68 361.76,299.84 361.30,299.63 360.47,300.06 359.68,301.00 359.31,301.81 359.39,302.84 359.53,303.98 359.28,304.41 358.59,304.58 357.79,305.31 357.32,306.19 357.38,307.02 357.57,308.18 357.41,309.24 356.77,309.54 355.99,309.76 355.55,310.12 355.47,310.61 355.83,311.39 357.01,312.27 358.21,312.89 358.99,313.04 359.75,312.91 360.31,312.96 360.32,313.49 360.42,314.42 361.19,315.33 362.51,316.00 363.25,316.34 363.95,316.34 364.25,316.25 364.26,316.37 365.18,316.79 366.50,317.37 367.22,317.83 367.88,318.00 367.73,318.18 367.32,318.93 367.17,320.30 367.87,321.53 369.14,322.00 370.20,322.00 370.77,322.33 371.06,323.30 371.06,324.46 370.63,325.27 370.12,325.69 370.63,325.43 371.82,325.35 372.60,325.94 373.27,327.07 373.92,328.13 373.88,327.84 374.17,327.31 374.81,326.76 375.54,325.81 376.08,324.61 376.34,324.09 376.58,324.21 377.09,323.90 378.11,323.17 379.35,322.50 380.25,321.50 380.56,320.49 380.56,320.37 380.75,320.39 381.17,320.88 381.82,320.78 382.41,320.30 383.13,319.95 384.55,319.99 386.12,320.22 386.95,320.22 387.33,319.81 387.86,319.31 388.33,319.20 388.76,319.66 389.07,319.69 389.78,319.78 390.92,319.19 392.18,318.13 393.14,317.59 393.55,317.80 393.26,316.65 392.39,315.36 391.35,314.74 390.76,314.72 390.76,314.42 390.95,313.54 390.90,312.51 391.05,312.41 390.94,311.72 391.06,310.75 391.70,309.95 392.61,308.77 393.29,307.61 393.48,307.30 393.41,307.16 392.90,306.65 392.73,306.18 393.11,305.55 393.82,304.41 394.23,303.08 393.88,302.39 392.95,302.34 393.21,302.29 393.87,301.67 394.83,301.09 395.66,300.39 395.95,299.54 395.77,299.41 395.56,299.69 395.79,299.27 396.53,298.40 397.29,297.49 397.44,295.93 397.14,294.59 397.13,293.93 397.77,292.98 397.69,292.46 397.21,292.49 396.32,292.93 395.51,293.37 394.45,293.37 393.36,292.81 393.09,291.95 393.09,291.32 392.44,291.24 391.54,291.72 390.70,292.29 389.55,292.40 388.72,291.78 388.69,290.73 388.41,289.85 387.42,289.64 386.44,290.06 385.44,290.62 384.35,290.43 383.99,289.50 384.27,288.23 384.15,287.26 383.59,286.83 383.18,286.59 382.63,286.02 381.96,284.96 381.69,283.74 381.75,282.97 381.30,282.84 380.39,282.92 379.69,282.57 379.10,281.65 378.41,280.63 378.51,279.82 378.74,279.69 378.82,279.53 378.58,278.74 378.11,277.64 377.75,276.71 377.74,275.83 378.01,274.97 378.13,274.53 377.77,274.43 376.71,274.27 376.27,273.48 376.27,272.47 375.79,271.81 375.03,271.63 374.42,271.49 373.58,270.86 372.40,269.71 372.11,268.70 372.04,268.33 371.31,268.63 370.49,269.10 369.62,269.11 368.28,268.97 367.32,268.47 367.07,268.57 367.30,269.32 367.39,270.00"/>
<polygon points="515.34,197.10 515.71,197.24 516.23,197.61 517.05,197.73 517.81,197.47 518.72,197.20 520.04,197.30 521.18,197.60 521.48,197.59 521.54,197.99 521.53,198.33 521.47,198.96 521.26,200.09 521.16,201.30 521.62,201.90 522.68,201.91 523.83,202.08 524.37,203.04 524.23,204.15 523.67,205.03 523.20,205.99 523.15,206.75 523.45,206.85 523.75,207.03 523.76,207.98 523.25,208.91 522.62,209.60 522.44,210.73 522.85,211.68 523.45,212.05 523.66,212.80 523.34,213.74 522.88,214.41 523.10,215.26 523.44,216.49 524.06,217.41 524.60,217.60 524.78,217.49 524.91,217.80 525.34,218.78 525.84,219.92 525.76,220.81 525.86,221.50 526.22,222.20 526.58,222.55 526.59,223.04 526.10,224.36 525.42,225.75 525.05,226.51 525.33,227.09 525.67,227.79 525.75,227.93 525.39,227.98 524.87,228.59 524.62,229.21 524.85,229.73 525.31,230.86 525.55,232.18 525.30,233.02 524.75,233.89 524.02,235.05 523.75,235.49 523.80,235.49 523.70,235.80 523.13,236.04 522.22,236.24 521.44,237.15 521.12,238.27 521.17,238.84 521.15,239.35 521.02,240.50 520.52,241.17 520.09,241.67 520.11,242.40 520.47,242.68 520.70,242.84 520.47,243.74 519.92,244.81 518.87,245.50 518.21,246.17 517.88,246.62 517.64,246.60 517.27,246.55 516.74,247.20 516.11,248.33 515.52,248.98 515.03,248.87 514.03,248.48 512.79,248.27 512.14,248.11 511.54,247.87 511.17,247.49 511.08,247.04 510.12,246.65 509.27,246.61 508.87,246.32 508.84,245.38 508.73,244.07 508.46,243.00 508.28,242.50 508.11,242.29 507.55,241.92 506.71,241.13 506.15,240.22 506.17,239.27 506.44,238.30 506.45,237.68 506.15,237.57 505.88,237.32 505.78,236.41 505.07,235.21 503.89,234.40 503.13,234.30 502.74,234.56 502.36,234.49 502.39,233.73 502.66,232.58 502.20,231.68 500.92,231.29 500.06,230.93 499.36,230.23 498.78,229.24 498.77,228.48 498.27,228.37 496.89,228.69 496.41,228.01 496.51,227.11 496.83,226.22 496.86,224.91 496.42,223.66 495.84,223.25 495.63,223.04 496.00,222.31 496.63,221.44 497.16,220.68 497.11,219.48 496.61,218.54 496.23,218.31 496.39,217.86 496.95,217.35 497.36,217.09 497.27,216.12 496.87,214.62 497.11,213.69 497.81,212.78 498.79,211.86 499.62,211.63 500.01,211.69 500.06,211.10 500.20,210.21 500.76,209.55 501.66,208.62 502.45,207.83 502.69,207.92 502.53,207.85 502.57,207.31 503.14,206.88 503.99,205.93 504.53,204.60 504.50,203.97 504.36,203.94 504.41,203.74 505.04,203.33 506.28,202.77 507.69,201.93 508.76,201.25 509.25,201.35 509.38,201.70 509.66,201.34 510.26,200.28 511.09,199.44 511.86,199.34 512.49,199.51 513.18,199.22 514.01,198.41 514.79,197.58"/>
<polyline points="476.22,137.49 475.81,137.39 475.06,137.99 474.52,138.62 474.53,139.38 474.80,140.88 474.78,142.24 474.21,143.12 473.44,144.17 473.02,144.77 472.97,144.68 473.07,144.94 472.83,145.48 472.10,145.89 471.26,146.80 470.77,148.02 470.77,148.58 470.92,148.90 470.74,149.58 470.07,149.96 469.30,150.44 468.95,151.67 469.09,152.74 469.28,153.46 469.02,154.38 468.31,154.80 467.61,154.66 467.38,155.03 467.59,155.64 467.72,156.17 467.35,157.34 466.57,158.68 465.93,159.36 465.79,160.06 466.00,160.81 466.02,161.05 465.54,161.56 464.74,162.61 464.12,163.36 463.97,163.94 464.12,164.76 464.12,165.09 463.63,164.91 462.80,165.17 462.10,165.72 461.88,166.17 461.99,167.21 461.89,168.66 461.32,169.52 460.39,170.04 459.54,170.72 459.13,171.11 459.08,171.44 458.98,172.49 458.44,173.68 457.49,174.29 456.55,174.78 456.04,175.20 455.90,175.03 455.81,175.10 455.33,176.02 454.46,176.88 453.64,177.45 453.31,178.16 453.45,178.44 453.63,178.32 453.38,178.92 452.67,180.02 451.91,180.85"/>
<polyline points="446.13,180.10 447.46,181.09 447.83,181.70 447.69,181.51 448.06,181.03 448.73,181.05 449.59,181.23 450.98,181.31 451.77,181.16 451.72,181.61 452.29,182.21 453.21,182.64 454.21,182.88 455.67,183.26"/>
<polyline points="490.62,148.02 490.43,148.74 489.73,149.44 489.04,150.31 488.87,150.48 489.15,150.67 489.31,151.37 488.90,151.83 488.15,152.68 487.67,154.15 487.57,155.13 487.69,155.93 487.44,156.78 486.63,156.87 485.68,156.91 485.16,157.65 485.13,158.32 485.11,159.13 484.59,160.34 483.42,160.82 482.36,160.72 481.82,161.04 481.77,161.60 481.77,162.17 481.38,163.18 480.57,164.09 479.73,164.12 479.27,164.09 479.21,164.62 479.24,165.32 478.97,166.09 478.29,167.19 477.43,167.99 476.75,168.03 476.42,168.16 475.97,168.83 475.22,169.75 474.17,170.34 473.09,170.68 472.30,170.78 471.92,170.61 471.83,170.84 471.72,171.81 471.49,172.74 470.82,172.86 469.87,172.83 468.99,173.25 468.47,173.81 468.27,174.51 468.05,175.65 467.36,176.75 466.14,176.85 464.94,177.09 464.32,178.00 464.34,178.86 464.46,179.88 464.35,180.95 464.43,181.31 464.54,181.26 464.62,181.72 465.01,182.94 465.83,184.17"/>
<polyline points="445.17,189.29 445.58,188.53 446.66,188.16 448.22,187.97 449.64,187.85 450.40,187.56 450.49,186.78 450.39,185.85 450.61,185.59 451.30,185.97 452.35,185.86 453.46,184.78 454.39,183.76 455.09,183.44 455.67,183.26 456.41,183.42 456.48,183.35 456.79,183.10 457.72,183.03 458.74,183.39 459.83,183.96 461.20,184.10 462.31,183.52 462.67,182.53 462.62,181.87 462.84,181.96 463.44,182.45 464.09,182.66 464.84,183.46 465.83,184.17"/>
<polyline points="498.03,154.32 498.23,155.12 498.42,156.29 498.19,156.94 497.63,157.42 497.21,158.26 497.28,158.75 497.74,159.11 498.08,160.13 497.92,161.21 497.36,162.03 496.92,163.24 497.12,164.44 497.73,164.87 498.34,165.15 498.54,165.57 498.28,165.68 497.89,166.01 497.71,167.13 497.81,168.20 497.89,168.85 497.65,169.64 496.90,170.59 496.12,171.17 495.82,172.03 495.98,172.94 496.09,173.15 495.71,173.52 494.92,174.32 494.26,174.92 494.15,175.93 494.38,177.49 494.42,178.50 493.89,179.22 493.07,179.96 492.59,179.92 492.67,179.85 492.90,180.45 492.70,180.94 491.96,181.68 491.18,182.85 490.81,183.38 490.87,183.48 490.91,184.03 490.48,184.67 489.58,185.37 488.32,186.28 487.11,187.16 486.32,187.28 486.07,186.86 486.12,186.82 486.01,187.51 485.44,188.34 484.41,188.76 483.39,188.86 482.73,188.97 482.42,189.06 482.08,189.50 481.33,190.57 480.73,191.66 479.95,192.12 479.57,192.77 479.72,193.67 479.92,194.20 478.79,194.07 478.13,194.54 477.83,195.00 476.91,194.97 475.41,194.71 474.14,194.80 473.02,195.37 472.05,195.72 471.72,195.48 471.79,194.70 471.26,193.87 470.24,193.56 469.47,193.93 468.82,194.61"/>
<polyline points="465.83,184.17 466.58,184.77 466.69,184.98 466.37,185.35 466.21,185.97 466.42,186.75 466.81,187.73 467.24,188.95 467.99,189.64 468.72,189.74 469.01,190.27 468.72,191.41 468.15,192.45 467.76,193.45 467.84,194.53 468.19,195.04 468.31,195.06 468.06,195.50 467.63,196.44 467.40,197.25 467.63,198.04 468.24,199.08 468.89,199.77 469.22,199.84 469.14,200.08 468.86,200.87 468.69,201.67 468.83,202.52 469.09,203.87 469.11,205.15 468.75,205.77 468.20,206.29 467.84,207.02 467.89,207.49 468.21,207.89 468.44,208.86 468.26,209.97 467.73,210.56 467.23,211.03 467.15,211.62 467.60,211.76 468.24,211.69 468.64,212.25 468.54,213.22 468.10,214.06 467.72,215.13 467.70,216.50 468.01,217.41"/>
<polyline points="479.92,194.20 480.41,195.23 480.41,196.13 480.35,196.46 480.52,196.60 480.79,197.48 480.92,198.93 481.05,199.40 480.61,199.95 479.56,200.54 478.27,200.77 477.17,200.45 476.48,200.18 476.10,200.71 475.46,201.16 475.14,201.59 475.25,201.65 474.95,201.45 473.83,201.34 472.60,201.54 471.65,201.88 470.67,201.97 469.77,201.63 469.33,201.09 468.86,200.87"/>
<polyline points="476.10,200.71 476.36,202.11 476.29,203.15 475.75,204.06 475.02,205.15 474.59,205.70 475.52,205.80 476.79,205.74 477.26,206.17 477.45,207.06 478.28,207.84 479.17,208.10 480.01,208.07 481.17,208.34 481.90,209.12 481.79,210.21 481.72,211.16 482.12,211.61 482.51,211.60 482.99,211.52 483.37,212.31 483.95,213.27 484.29,214.10 484.39,214.75 484.57,215.23 484.88,215.51 484.82,215.92 484.58,216.83 484.62,218.36 485.29,219.54 486.37,219.99 487.22,220.41"/>
<polyline points="487.22,220.41 487.61,219.41 487.64,219.15 488.16,219.85 488.77,220.82 489.64,221.18 490.95,221.02 491.58,220.64 491.58,220.51 492.15,220.74 493.11,221.06 494.10,221.19 495.53,221.23 496.63,221.44"/>
<polyline points="529.89,189.47 529.03,189.16 528.93,189.55 528.98,190.48 528.38,191.19 527.51,191.19 526.73,190.58 525.87,190.35 524.78,190.95 523.90,191.75 523.50,191.85 523.11,191.34 522.27,191.13 522.72,192.13 522.92,193.12 522.59,194.09 521.90,195.53 521.37,196.65 521.28,197.08 521.48,197.59"/>
<polyline points="549.37,219.95 548.39,219.92 547.76,220.30 547.68,220.73 547.76,221.29 547.46,222.66 546.64,223.83 545.76,224.30 545.34,224.89 545.33,225.16 545.35,225.39 544.92,226.50 544.06,227.69 543.23,227.96 542.81,228.15 542.20,228.10 541.38,228.28 540.51,228.77 539.74,229.46 539.03,229.89 538.31,229.77 537.68,229.57 537.32,230.06 537.54,231.49 537.56,232.63 537.06,233.48 536.29,234.55 535.77,235.13 535.79,235.23 535.85,235.65 535.69,236.38 535.06,236.94 534.15,237.74 533.40,238.53 533.08,238.57 533.05,238.40 532.89,238.84 531.85,239.64 530.47,240.49 529.30,241.36 528.80,241.91 528.92,241.84 529.10,241.99 528.75,243.06 527.73,244.16 526.39,244.33 525.26,244.12 524.55,244.32 524.13,244.84 523.68,245.47 523.04,246.22 522.28,246.62 521.61,246.41 521.32,245.43 519.92,244.81"/>
<polyline points="487.74,243.80 488.07,244.01 488.13,243.87 488.43,243.62 489.47,243.61 490.80,243.93 491.57,244.27 492.02,244.46 492.59,244.67 492.89,245.02 493.46,245.42 494.81,245.73 495.91,245.92 496.26,246.10 496.61,246.49 496.96,247.03 497.18,247.56 498.08,247.91 499.43,248.01 500.09,247.99 500.35,248.07 500.85,248.40 501.26,248.95 501.91,249.51 503.27,249.79 504.50,249.80 504.94,249.68 505.29,249.65 505.85,249.87 506.28,250.29 507.05,250.76 508.39,251.08 509.31,251.19 509.91,250.54 510.59,250.23 511.34,250.41 512.05,250.54 512.49,249.84 513.10,248.86 514.16,248.51 515.03,248.87"/>
<polyline points="521.61,246.41 521.16,246.39 520.66,247.24 520.03,248.33 519.36,248.66 518.65,248.31 517.78,248.21 516.71,248.75 515.67,249.42 515.08,249.77 515.04,249.43 514.90,248.99 514.09,248.91 513.08,249.40 512.45,250.15 511.98,250.58 511.34,250.41"/>
<polyline points="493.49,253.43 494.14,253.17 494.81,253.22 495.05,252.64 494.85,251.72 494.65,250.95 495.13,250.53 495.55,250.06 496.44,250.08 498.11,250.36 499.65,250.27 500.37,249.59 500.73,248.87 501.26,249.29 501.63,250.28 502.31,251.38 503.74,252.01 504.91,251.94 505.31,251.42 505.70,251.00 506.19,251.15 506.53,251.94 507.39,252.99 508.72,253.73 509.33,254.03 509.29,253.89 509.37,253.88 509.47,254.32 509.49,255.07 510.13,255.72 511.43,255.83 512.02,255.94 512.19,256.41 512.68,257.35 513.11,258.41 513.76,259.05 515.13,259.00 516.22,258.52 516.46,258.22 516.76,258.58 517.11,259.05 517.62,259.56 518.45,259.47 519.77,258.90 521.26,258.51 522.26,258.65 522.48,259.01 522.37,259.02 522.47,258.49 522.92,257.73 523.57,257.13 524.51,256.87 525.87,256.75 527.32,256.50 528.21,255.99 528.36,255.38 528.29,254.99 528.53,255.00 528.97,255.05 529.71,255.15 530.70,254.81 531.85,253.99 532.97,253.39 533.83,253.58 534.24,254.10 534.27,254.04 534.22,253.27 534.51,252.50 535.32,252.17 536.48,252.09 537.72,252.08 538.59,251.78 539.15,251.14 539.70,250.33 540.25,249.67 540.67,249.41 541.04,249.43 541.77,249.28 542.97,248.66 544.23,247.88 545.08,247.62 545.50,248.07 545.83,248.55 546.31,248.38 546.86,247.59 547.39,246.98 547.99,247.11 548.87,247.60 549.92,247.61 550.79,246.89 551.27,245.98 551.52,245.50 551.92,245.46 552.62,245.42 553.41,245.08 554.03,244.47"/>
<polyline points="528.53,255.00 528.04,253.82 528.26,253.45 528.58,253.41 528.44,252.85 528.07,251.60 527.74,250.36 527.20,249.70 526.37,249.48 525.85,249.17 525.89,248.91 525.49,248.29 524.43,247.58 523.57,247.16 522.92,247.12 522.24,247.07"/>
<polyline points="517.58,285.59 517.67,285.39 517.46,284.35 517.44,283.25 517.94,282.41 519.09,281.75 520.41,281.58 521.41,281.93 521.91,281.81 522.15,280.80 522.58,279.93 523.39,279.85 524.40,279.93 525.11,279.60 525.36,279.13 525.29,278.44 525.28,277.39 525.72,276.61 526.73,276.63 528.04,276.76 529.20,276.17 529.90,275.19 530.45,274.67 530.55,274.50 530.81,274.68 531.28,274.82 531.80,274.53 532.66,273.90 534.11,273.44 535.59,273.62 536.40,274.35 536.71,275.02 537.08,274.81 537.45,274.01 537.72,273.38 538.10,273.31 538.97,273.47 540.26,273.23 541.42,272.44 542.05,271.53 542.40,271.01 542.83,270.95 543.35,271.04 543.77,270.93 544.26,270.59 545.06,270.06 546.33,269.62 547.60,269.56 548.34,269.88 548.44,269.77 548.31,268.78 548.49,267.84 549.23,267.81 550.39,268.12 551.56,268.04 552.68,267.36 553.71,266.62 554.37,266.33 554.47,266.42 554.27,266.44"/>
<polyline points="425.09,178.07 425.28,178.16 425.90,178.60 426.49,179.40 426.77,180.30 427.09,181.05 427.55,181.13 427.76,181.16 428.04,181.45 429.15,182.18 430.40,183.21 430.96,184.10 431.38,184.48 431.90,184.31 432.18,183.99 432.91,183.83 434.45,184.46 435.49,185.44 435.86,186.06 436.38,185.98 436.72,185.48 437.27,185.19 438.62,185.45 439.71,186.16 439.97,187.02 440.27,187.57 440.65,187.56 440.97,187.18 442.01,186.88 443.36,187.08 443.90,187.82 444.13,188.73 444.68,189.31 445.17,189.29"/>
<polyline points="444.38,170.17 444.80,171.25 444.91,172.74 444.71,173.79 444.46,174.26 444.48,174.78 444.78,175.23 445.10,175.27 445.12,175.69 444.88,176.79 444.58,177.96 444.43,178.60 444.51,178.93 444.86,179.35 445.42,179.70 446.04,179.99 446.29,180.71 446.15,182.01 445.84,182.93 445.69,183.32 445.78,183.86 445.96,184.43 445.94,184.83 445.61,185.77 445.18,187.33 444.97,188.55 445.17,189.29"/>
<polyline points="404.94,194.28 406.05,194.08 406.38,194.52 406.49,195.69 407.22,197.09 408.09,198.05 408.90,198.38 410.13,198.42 410.74,198.68 410.54,199.22 410.90,199.71 411.64,199.88 412.38,199.98 413.22,200.68 413.63,202.09 413.38,203.52 413.71,204.22 414.63,204.24 415.46,203.92 416.57,203.76 417.60,204.09 417.72,204.86 417.78,205.48 418.54,205.94 419.81,205.48 421.02,204.49 422.02,203.90 422.90,203.93 423.62,204.06 423.56,203.81 423.48,203.17 424.23,202.63 425.25,202.75 426.18,204.13 427.42,205.11 428.17,205.55 428.25,206.05 428.94,207.15 429.83,208.40 430.29,209.06 431.27,207.92 431.89,207.23 432.08,206.76 432.14,206.29 432.44,206.27 433.13,206.32 433.93,205.56 434.38,204.57 434.54,204.16 434.93,204.33 436.37,204.67 437.27,204.93 437.86,205.88 438.10,207.29 438.52,206.29 438.37,205.50 438.49,204.84 439.01,204.44 440.01,204.33 441.10,203.60 441.86,202.28 442.19,201.32 442.35,200.66 442.52,199.56 443.25,199.15 444.06,199.09 444.36,198.50 444.17,198.12 444.05,197.65 444.22,196.59 444.73,195.71 445.01,194.85 444.74,193.50 444.24,192.68 444.12,192.26 444.60,191.55 445.39,191.24 445.53,190.64 445.17,189.29"/>
<polyline points="400.50,204.37 401.91,204.49 402.86,204.64 403.03,204.43 402.91,203.96 403.07,203.61 403.61,203.63 404.37,203.90 405.47,204.34 407.12,204.18 408.45,203.59 408.82,203.15 409.03,203.10 409.62,203.02 410.34,202.79 411.23,202.43 412.51,202.34 413.23,202.80 413.24,203.61 413.71,204.22"/>
<polyline points="438.49,204.84 439.41,205.87 440.53,206.25 441.27,206.36 441.77,206.87 442.14,208.07 442.09,209.49"/>
<polyline points="404.37,203.90 404.34,205.13 404.89,205.71 405.89,205.89 406.81,206.24 407.13,206.91 406.90,207.67 406.51,208.55 406.34,209.59 406.44,210.44 406.76,210.68 407.31,210.68 408.06,211.22 408.80,212.40 409.14,213.53 408.93,214.18 408.46,214.60 408.14,214.95 408.25,215.10 408.35,215.38 408.03,216.40 407.27,217.41 406.51,218.04 406.18,218.96 406.29,219.80 406.41,220.13 406.11,220.78 405.45,222.01 404.82,222.66 404.70,223.31 405.06,224.29 405.37,224.87 405.19,225.53 404.67,226.83 404.17,227.88 404.11,228.62 404.41,229.50 404.62,229.78 404.45,229.63 404.09,230.12 403.29,230.57 402.99,231.03 403.03,232.14 402.92,233.43 402.38,234.04 401.54,234.48 400.88,235.18 400.71,235.63 400.90,236.25 400.95,237.59 400.53,238.74 399.75,239.32 399.09,239.95 398.89,240.32 399.06,240.08 399.13,240.17 398.74,240.84"/>
<polyline points="359.61,252.73 360.63,253.19 361.88,252.96 362.63,252.43 363.32,252.13 363.85,252.24 363.97,252.54 364.58,252.70 366.02,252.64 367.20,252.60 367.81,252.82 368.46,253.11 368.87,253.33 369.13,253.35 370.17,253.24 371.68,253.24 372.64,253.55 373.25,254.15 373.92,254.78 374.29,255.08 374.66,255.07 375.84,255.03 377.04,255.25 377.48,255.74 377.78,256.29 378.07,256.70 378.08,256.96 378.77,257.28 380.13,257.56 381.12,257.79 381.50,258.02 381.98,258.31 382.44,258.65 382.80,258.97 383.83,259.17 385.32,259.21 385.49,258.22 385.31,257.22 385.28,256.66 385.73,255.92 386.53,255.28 387.20,255.24 387.38,254.94 387.22,254.09 387.22,253.39 387.69,252.48 388.50,251.08 389.20,250.09 389.46,249.71 389.34,249.21 389.29,248.86 389.68,248.93 390.46,248.56 391.20,247.66 391.52,247.02 391.42,246.31 391.21,245.62 391.41,245.45 392.17,245.53 393.22,244.84 394.10,243.56 394.56,242.79 394.76,242.63 395.13,242.46 396.38,242.25 397.90,241.62 398.74,240.84"/>
<polyline points="430.29,209.06 429.09,209.79 428.27,209.63 427.78,209.75 427.36,210.69 426.82,211.65 426.06,212.29 425.25,212.82 424.88,212.77 424.94,212.76 424.99,212.86 425.33,213.31 426.13,214.37 426.80,215.76 427.69,215.98 428.61,215.47 428.89,214.81 428.95,215.22 429.10,215.77 429.37,216.43 429.45,217.47 429.20,218.86 429.44,219.80 430.24,220.01 431.15,220.51 431.54,221.45 431.23,222.32 430.57,223.52 430.20,224.88 430.28,225.58 430.46,225.82 430.32,226.28 429.76,226.53 429.11,226.55 428.80,227.23 428.96,228.32 429.43,229.31 429.76,230.10 430.04,230.80 430.36,231.27 430.64,231.51 430.77,232.04 430.84,233.23"/>
<polyline points="398.74,240.84 398.02,241.32 397.49,242.06 397.54,243.27 398.14,244.41 398.92,244.85 399.57,244.88 400.01,245.29 400.26,246.18 400.36,247.12 400.31,248.02 400.38,248.28 400.71,248.58 401.69,248.90 402.58,249.18 403.58,249.41 404.61,249.65 404.80,249.97 405.14,250.19 406.10,250.64 407.35,250.76 408.34,250.18 409.18,249.24 409.97,248.62 410.33,248.83 410.30,249.72 411.16,250.69 412.40,251.09 413.35,250.78 414.39,250.19 414.93,249.97 414.91,250.43 414.96,249.84 415.52,249.44 416.26,249.24 416.70,248.44 416.64,247.55 416.38,247.11 416.44,246.45 416.99,245.69 417.73,245.46 418.24,245.36 418.35,244.49 418.38,243.57 418.82,242.61 419.82,241.44 421.03,240.93 421.91,240.93 422.26,240.30 422.36,239.30 422.84,238.58 423.55,237.92 424.48,237.57 425.34,237.81 425.78,237.95 425.81,237.19 425.88,236.18 426.48,236.00 427.60,236.22 428.98,236.06 430.15,235.53 430.77,234.90 430.88,234.07 430.84,233.23"/>
<polyline points="430.84,233.23 431.17,234.70 431.76,235.43 432.17,235.56 432.11,236.00 431.98,236.95 432.30,238.02 433.01,239.03 433.63,239.83 433.78,240.32 434.24,240.83 434.69,241.66 435.18,242.69 436.32,243.41 437.56,242.91 437.97,242.21 438.01,241.80 438.34,241.70 438.86,241.56 439.52,241.14 440.79,240.70 442.47,240.69 443.56,241.38 443.97,242.12 444.62,242.27 445.48,241.77 446.22,241.15 447.29,241.03 447.38,241.17 447.53,240.89 448.09,240.58 449.02,240.20 449.90,239.16 450.34,238.00"/>
<polyline points="416.99,248.66 417.35,249.13 417.60,249.95 417.75,251.19 418.14,252.22 418.83,252.49 419.32,252.47 419.20,253.05 418.78,254.15 418.70,255.25 419.05,255.86 419.48,256.07 419.98,256.34 420.80,256.93 421.71,257.78 422.11,258.72 421.99,259.60 421.94,260.28 422.24,260.66 422.59,260.96 422.86,261.62 423.35,262.82 424.10,264.12 424.63,264.91 424.63,264.99 424.15,265.19 423.54,266.08 423.26,267.14 423.52,268.05 424.17,269.07 424.87,269.90 424.34,270.42 423.33,271.25 422.10,272.28 421.16,272.57 420.86,272.18 421.06,272.35 421.19,273.28 420.78,274.03 419.74,274.42 418.43,274.72 417.36,274.83 416.78,274.93 416.53,275.69 416.22,276.97 415.53,277.68 414.53,277.58 413.61,277.63 413.20,278.31 413.23,278.99 413.39,279.70 413.25,280.56 412.60,280.91 411.62,280.59 410.68,280.61 410.04,281.36 409.67,282.13 409.26,282.70 408.58,283.34 407.65,283.65"/>
<polyline points="432.49,243.84 432.64,244.86 432.91,246.08 432.84,246.65 432.30,246.92 431.71,247.62 431.58,248.13 432.01,248.52 433.42,249.93 434.46,251.24 434.67,251.73 434.53,251.73 434.38,252.20 434.10,253.41 434.03,254.68 434.55,255.34 435.52,255.69 436.36,256.09 436.64,256.58 436.46,257.17 436.25,258.03 436.21,259.18 436.29,260.15 436.48,260.61 436.84,260.71 437.24,261.40 437.54,262.58 437.68,263.60 437.77,264.55 438.00,265.51"/>
</g>
<path d="M479.6,271.8 h7.6 a1.9,1.9 0 0 1 1.9,1.9 v8.3 a1.9,1.9 0 0 1 -1.9,1.9 h-1.7 l-2.1,2.3 l-2.1,-2.3 h-1.7 a1.9,1.9 0 0 1 -1.9,-1.9 v-8.3 a1.9,1.9 0 0 1 1.9,-1.9 z" fill="#0d0d18"/>
<rect x="479.4" y="273.6" width="8" height="8.3" rx="1.1" fill="#9a4bdc"/>
<circle cx="483.4" cy="277.7" r="1.6" fill="none" stroke="#e9d6fb" stroke-width="0.8"/>
</g>
</svg>
<div id="tabstrip"></div><div id="tab"></div><div id="toolbar"></div><div id="pill"></div><div id="redge"></div>
<svg class="abs" style="left:7.6px;top:4.6px" width="3.4" height="5.6" viewBox="0 0 3.4 5.6"><path d="M0.9,0.2 v3.6 q0,1.3 1.6,1.3" fill="none" stroke="#8fd0ff" stroke-width="1.1" stroke-linecap="round"/></svg>
<div class="wt" style="left:14.5px;top:4.6px;font-size:4.4px;line-height:5.6px;font-weight:bold;letter-spacing:-0.1px">WaterFALL</div>
<svg class="abs" style="left:77.5px;top:6px" width="3" height="3" viewBox="0 0 3 3"><path d="M0.4,0.4 L2.6,2.6 M2.6,0.4 L0.4,2.6" stroke="#fff" stroke-width="0.6"/></svg>
<svg class="abs" style="left:90.2px;top:5.7px" width="3.6" height="3.6" viewBox="0 0 3.6 3.6"><path d="M1.8,0.3 V3.3 M0.3,1.8 H3.3" stroke="#fff" stroke-width="0.65"/></svg>
<svg class="abs" style="left:1.6px;top:20.7px" width="4.6" height="4.6" viewBox="0 0 4.6 4.6"><path d="M3.9,2.3 A1.6,1.6 0 1 1 3.3,1.05" fill="none" stroke="#fff" stroke-width="0.65"/><path d="M2.6,0.2 L3.9,1.1 L2.6,1.7 Z" fill="#fff"/></svg>
<svg class="abs" style="left:16.2px;top:20.8px" width="5" height="4.4" viewBox="0 0 5 4.4"><path d="M0.3,1.2 H4.2 M3.2,0.3 L4.3,1.2 L3.2,2.1 M4.7,3.2 H0.8 M1.8,2.3 L0.7,3.2 L1.8,4.1" fill="none" stroke="#fff" stroke-width="0.55"/></svg>
<div class="wt" style="left:26px;top:20.1px;font-size:4.82px;line-height:5.8px"><b>stage.waterfall.cxntech.com</b><span style="color:#a9c4ea;font-size:5.1px;letter-spacing:0.2px">/waterfall/0f12554c-5ba0-4964-9ed0-dcd4f6deb605/recents</span></div>
<div class="wt" style="left:568.5px;top:20.2px;font-size:3.6px;line-height:5px;color:#c9d9f2;font-weight:bold">0&#8209;o</div>
<svg class="abs" style="left:579.5px;top:19.5px" width="6" height="6" viewBox="0 0 6 6"><path d="M3,0.6 L3.7,2.2 L5.5,2.4 L4.15,3.55 L4.55,5.3 L3,4.4 L1.45,5.3 L1.85,3.55 L0.5,2.4 L2.3,2.2 Z" fill="none" stroke="#fff" stroke-width="0.55" stroke-linejoin="round"/></svg>
<svg class="abs" style="left:597.2px;top:19.3px" width="6.4" height="6.4" viewBox="0 0 6.4 6.4"><path d="M1,2 h1.5 v-0.5 a0.7,0.7 0 0 1 1.4,0 v0.5 h1.5 v1.3 h0.3 a0.7,0.7 0 0 1 0,1.4 h-0.3 v1.2 h-4.4 z" fill="none" stroke="#fff" stroke-width="0.7" stroke-linejoin="round"/></svg>
<div class="abs" style="left:613.5px;top:17.2px;width:10.6px;height:10.6px;border-radius:5.3px;background:#154690"></div>
<div class="abs" style="left:618.2px;top:20.8px;width:1.2px;height:3.2px;border-radius:0.6px;background:#6db7ff"></div>
<div class="abs" style="left:630.4px;top:19.8px;width:1.2px;height:1.2px;border-radius:0.6px;background:#fff;box-shadow:0 2px 0 #fff,0 4px 0 #fff"></div>
<div class="abs" style="left:627px;top:3px;width:9.5px;height:9.5px;border-radius:4.8px;background:#1a509c"></div>
<svg class="abs" style="left:629.8px;top:6.4px" width="4" height="3" viewBox="0 0 4 3"><path d="M0.6,0.7 L2,2.1 L3.4,0.7" fill="none" stroke="#fff" stroke-width="0.7"/></svg>

<svg class="abs" style="left:100.4px;top:37.8px" width="13.5" height="13.5" viewBox="0 0 13 13"><path d="M6.3,12.4 V6.6" stroke="#1fa463" stroke-width="1.5" fill="none" stroke-linecap="round"/><path d="M6.2,7.2 C6.3,4.2 4.6,2.2 0.6,2.3 C0.5,5.6 2.6,7.4 6.2,7.2 Z" fill="#21a366"/><path d="M6.5,6.2 C6.2,3.2 8.3,0.9 12.3,0.9 C12.5,4.2 10.4,6.4 6.5,6.2 Z" fill="#6fcf8f"/></svg>
<div id="logo"><b>NBS</b><span>Explorer</span></div>
<div id="btn"><span style="position:absolute;left:7px;top:-0.3px;font-size:6px">+</span><span style="position:absolute;left:13.1px;top:-0.4px">Start a new project</span></div>
<svg class="abs" style="left:7.8px;top:84.6px" width="5.2" height="5.6" viewBox="0 0 5.2 5.6"><path d="M0.5,1.2 H3.3 A1.5,1.5 0 0 1 3.3,4.3 H1.0 M0.5,1.2 l0.9,-0.8 M0.5,1.2 l0.9,0.8" fill="none" stroke="#1976d2" stroke-width="0.6"/></svg>
<div id="recent">Recent</div>
<div id="tabline"><i></i></div>
<div id="search"><svg class="abs" style="left:2.6px;top:2.5px" width="5" height="5" viewBox="0 0 5 5"><circle cx="2.1" cy="2.1" r="1.5" fill="none" stroke="#777" stroke-width="0.6"/><path d="M3.2,3.2 L4.6,4.6" stroke="#777" stroke-width="0.6"/></svg><span>Search</span></div>
<div id="thead"><div style="left:5px">Name</div><div style="left:115px">NBS</div><div style="left:147.5px">Scenario</div><div style="left:184px">Updated</div>
<svg class="abs" style="left:207.3px;top:2.8px" width="5.4" height="6" viewBox="0 0 5.4 6"><path d="M1.4,5.4 V0.8 M0.3,1.9 L1.4,0.7 L2.5,1.9 M4,0.6 V5.2 M2.9,4.1 L4,5.3 L5.1,4.1" fill="none" stroke="#222" stroke-width="0.55"/></svg></div>
<div class="row" style="top:128px;height:25.5px"><div class="ttl" style="top:3.4px">North Park Proposal</div><div class="sub" style="top:11.30px">Region 7 › Tangipahoa › Fleet Easley Park (North</div><div class="sub" style="top:17.60px">Park)</div><span class="icw" style="left:115px;top:9.25px"><span class="ic p"><svg viewBox="0 0 8 8" width="8" height="8"><circle cx="4.1" cy="4.1" r="1.7" fill="none" stroke="#f0dcff" stroke-width="0.9" stroke-dasharray="2.4,1.15"/></svg></span></span><span class="icw" style="left:125px;top:9.25px"><span class="ic t"><svg viewBox="0 0 8 8" width="8" height="8"><path d="M2.1,1.8 h3.9 v4.5 l-1.95,-1.3 l-1.95,1.3 z" fill="#e8fbff"/></svg></span></span><div class="cell" style="left:147.5px;top:10.25px">current</div><div class="cell" style="left:184px;top:10.25px">a month ago</div></div>
<div class="row" style="top:153.5px;height:25.5px"><div class="ttl" style="top:3.4px">North Park Green Infrastructure</div><div class="sub" style="top:11.30px">Region 7 › Tangipahoa › Fleet Easley Park (North</div><div class="sub" style="top:17.60px">Park)</div><span class="icw" style="left:115px;top:9.25px"><span class="ic t"><svg viewBox="0 0 8 8" width="8" height="8"><path d="M2.1,1.8 h3.9 v4.5 l-1.95,-1.3 l-1.95,1.3 z" fill="#e8fbff"/></svg></span></span><div class="cell" style="left:147.5px;top:10.25px">current</div><div class="cell" style="left:184px;top:10.25px">a month ago</div></div>
<div class="row" style="top:179px;height:25.5px"><div class="ttl" style="top:3.4px">Fleet Easley Project</div><div class="sub" style="top:11.30px">Region 7 › Tangipahoa › Fleet Easley Park (North</div><div class="sub" style="top:17.60px">Park)</div><span class="icw" style="left:115px;top:9.25px"><span class="ic t"><svg viewBox="0 0 8 8" width="8" height="8"><path d="M2.1,1.8 h3.9 v4.5 l-1.95,-1.3 l-1.95,1.3 z" fill="#e8fbff"/></svg></span></span><div class="cell" style="left:147.5px;top:10.25px">current</div><div class="cell" style="left:184px;top:10.25px">a month ago</div></div>
<div class="row" style="top:204.5px;height:25.5px"><div class="ttl" style="top:3.4px">Fleet Easley Park GI</div><div class="sub" style="top:11.30px">Region 7 › Tangipahoa › Fleet Easley Park (North</div><div class="sub" style="top:17.60px">Park)</div><span class="icw" style="left:115px;top:9.25px"><span class="ic t"><svg viewBox="0 0 8 8" width="8" height="8"><path d="M2.1,1.8 h3.9 v4.5 l-1.95,-1.3 l-1.95,1.3 z" fill="#e8fbff"/></svg></span></span><div class="cell" style="left:147.5px;top:10.25px">current</div><div class="cell" style="left:184px;top:10.25px">a month ago</div></div>
<div class="row sel" style="top:230px;height:20px"><div class="ttl" style="top:3.0px">Riparian Vegetation Test</div><div class="sub" style="top:10.30px">Region 7 › Tangipahoa › A cool test</div><span class="icw" style="left:115px;top:6.0px"><span class="ic p"><svg viewBox="0 0 8 8" width="8" height="8"><circle cx="4.1" cy="4.1" r="1.7" fill="none" stroke="#f0dcff" stroke-width="0.9" stroke-dasharray="2.4,1.15"/></svg></span></span><div class="cell" style="left:147.5px;top:6.8999999999999995px">current</div><div class="cell" style="left:184px;top:6.8999999999999995px">2 months ago</div><div class="open">Open</div></div>
<div class="row" style="top:250px;height:18px"><div class="ttl" style="top:3.2px">Kentwood Green Infrastructure</div><div class="sub" style="top:10.80px">Region 7 › Tangipahoa › Kentwood</div><span class="icw" style="left:115px;top:5.0px"><span class="ic t"><svg viewBox="0 0 8 8" width="8" height="8"><path d="M2.1,1.8 h3.9 v4.5 l-1.95,-1.3 l-1.95,1.3 z" fill="#e8fbff"/></svg></span></span><div class="cell" style="left:147.5px;top:5.8999999999999995px">current</div><div class="cell" style="left:184px;top:5.8999999999999995px">2 months ago</div><svg class="warn" style="left:230.3px;top:5.8px" width="6" height="6" viewBox="0 0 6 6"><path d="M3,0.7 L5.5,5.2 H0.5 Z" fill="none" stroke="#e53935" stroke-width="0.7" stroke-linejoin="round"/><line x1="3" y1="2.4" x2="3" y2="3.6" stroke="#e53935" stroke-width="0.5"/></svg></div>
<div id="msearch"><svg class="abs" style="left:3px;top:3.2px" width="4.6" height="4.6" viewBox="0 0 4.6 4.6"><circle cx="1.8" cy="1.8" r="1.2" fill="none" stroke="#fff" stroke-width="0.7"/><path d="M2.7,2.7 L4.2,4.2" stroke="#fff" stroke-width="0.8"/></svg></div>
<div id="popup"><b>Riparian Vegetation Test</b><span>Completed on: Jul 2nd 2024, 2:57 pm</span></div>
<div id="cat"><div class="l" style="left:5.2px">Category</div><div class="l" style="left:66.2px">Metric</div>
<div class="s" style="left:5px">Hydrology<svg width="4.4" height="3" viewBox="0 0 4.4 3"><path d="M0.5,0.6 L2.2,2.3 L3.9,0.6" fill="none" stroke="#333" stroke-width="0.6"/></svg></div>
<div class="s" style="left:65.7px">Mean daily flow...<svg width="4.4" height="3" viewBox="0 0 4.4 3"><path d="M0.5,0.6 L2.2,2.3 L3.9,0.6" fill="none" stroke="#333" stroke-width="0.6"/></svg></div></div>
<div id="legend"><b>Mean daily flow (cfs)</b>
<i style="top:10.7px;background:#3967b0"></i><span style="top:10.9px">23 – 30</span>
<i style="top:19.7px;background:#5f8ecd"></i><span style="top:19.9px">15 – 23</span>
<i style="top:28.7px;background:#81b1e3"></i><span style="top:28.9px">7.7 – 15</span>
<i style="top:37.7px;background:#a6d4fa"></i><span style="top:37.9px">0.11 – 7.7</span></div>
<div class="zb" style="top:378.8px"><svg class="abs" style="left:3.2px;top:3.4px" width="4.6" height="4.6" viewBox="0 0 4.6 4.6"><path d="M2.3,0.3 V4.3 M0.3,2.3 H4.3" stroke="#fff" stroke-width="0.9"/></svg></div>
<div class="zb" style="top:391px"><svg class="abs" style="left:3.2px;top:3.4px" width="4.6" height="4.6" viewBox="0 0 4.6 4.6"><path d="M0.3,2.3 H4.3" stroke="#fff" stroke-width="0.9"/></svg></div>
<div id="attr"><i style="position:absolute;left:1.2px;top:1.3px;width:3.4px;height:1.2px;background:#3b7bd6"></i><i style="position:absolute;left:1.2px;top:2.5px;width:3.4px;height:1.2px;background:#f5d33a"></i>Leaflet</div>
<div id="botshade"></div>
</body></html>
